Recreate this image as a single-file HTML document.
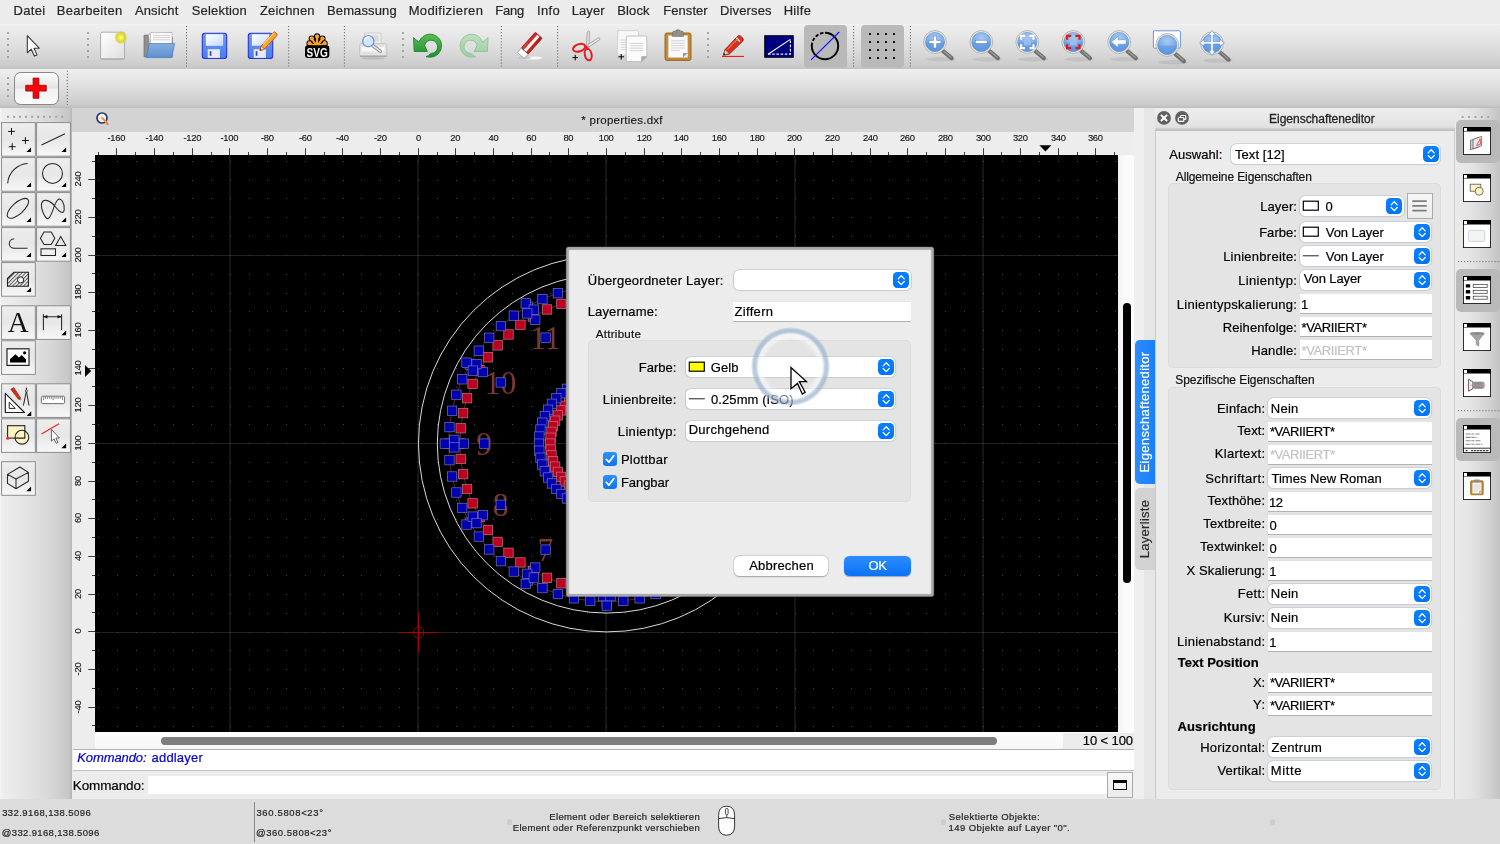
<!DOCTYPE html>
<html lang="de"><head><meta charset="utf-8"><title>properties.dxf</title>
<style>
*{box-sizing:border-box}
html,body{margin:0;padding:0;background:#ececec}
body{width:1500px;height:844px;overflow:hidden;font-family:'Liberation Sans',sans-serif;font-size:13px;color:#000}
#app{position:relative;width:1500px;height:844px;overflow:hidden;will-change:transform;transform:translateZ(0)}
#app div,#app span,#app svg,#app nav,#app section,#app header,#app footer,#app aside,#app button,#app label{position:absolute;margin:0;padding:0}
.t{white-space:pre;display:block;-webkit-text-stroke:.2px currentColor}
.ic{overflow:visible}
button{border:0;background:none;font:inherit}
.combo{background:#fff;border-radius:5.5px;box-shadow:0 0 0 .8px #c3ccd7,0 .5px 1px .5px rgba(90,110,140,.16)}
.pop{background:linear-gradient(#0a80ff,#0074fa);border-radius:4.2px}
.inp{background:#fff;box-shadow:0 .8px 0 0 #a6a6a6,0 -.4px 0 0 #dedede}
.grp{background:#e4e4e4;border-radius:5px;box-shadow:inset 0 0 0 1px #dcdcdc}
.tb{border:1px solid #8f8f8f;background:linear-gradient(#f6f6f6,#e4e4e4 45%,#ededed 55%,#f4f4f4)}
.sel{background:#b9b9b9;border-radius:4px}
.win{background:#fff;border:1px solid #000}
</style></head>
<body>
<div id="app">
<nav id="menubar" style="left:0;top:0;width:1500px;height:24px;background:#ececec"><span class="t" style="left:13.43px;top:3.00px;font-size:13px;line-height:15px;color:#262626;letter-spacing:0.347px;">Datei</span><span class="t" style="left:56.83px;top:3.00px;font-size:13px;line-height:15px;color:#262626;letter-spacing:0.269px;">Bearbeiten</span><span class="t" style="left:134.88px;top:3.00px;font-size:13px;line-height:15px;color:#262626;letter-spacing:0.129px;">Ansicht</span><span class="t" style="left:191.72px;top:3.00px;font-size:13px;line-height:15px;color:#262626;letter-spacing:0.193px;">Selektion</span><span class="t" style="left:259.99px;top:3.00px;font-size:13px;line-height:15px;color:#262626;letter-spacing:0.153px;">Zeichnen</span><span class="t" style="left:327.03px;top:3.00px;font-size:13px;line-height:15px;color:#262626;letter-spacing:0.119px;">Bemassung</span><span class="t" style="left:408.63px;top:3.00px;font-size:13px;line-height:15px;color:#262626;letter-spacing:0.384px;">Modifizieren</span><span class="t" style="left:495.23px;top:3.00px;font-size:13px;line-height:15px;color:#262626;letter-spacing:-0.176px;">Fang</span><span class="t" style="left:537.10px;top:3.00px;font-size:13px;line-height:15px;color:#262626;letter-spacing:0.284px;">Info</span><span class="t" style="left:571.63px;top:3.00px;font-size:13px;line-height:15px;color:#262626;letter-spacing:0.140px;">Layer</span><span class="t" style="left:617.33px;top:3.00px;font-size:13px;line-height:15px;color:#262626;letter-spacing:0.089px;">Block</span><span class="t" style="left:663.23px;top:3.00px;font-size:13px;line-height:15px;color:#262626;letter-spacing:0.068px;">Fenster</span><span class="t" style="left:720.03px;top:3.00px;font-size:13px;line-height:15px;color:#262626;letter-spacing:0.139px;">Diverses</span><span class="t" style="left:783.63px;top:3.00px;font-size:13px;line-height:15px;color:#262626;letter-spacing:0.308px;">Hilfe</span></nav><header id="toolbar1" style="left:0;top:24px;width:1500px;height:44.500px;background:linear-gradient(#f3f3f3 0,#eeeeee 1.500px,#e8e8e8 22%,#dfdfdf 48%,#d5d5d5 72%,#cbcbcb 93%,#c2c2c2 100%)"></header><header id="toolbar2" style="left:0;top:68.500px;width:1500px;height:39.200px;background:linear-gradient(#f1f1f1 0,#ededed 1.500px,#e7e7e7 22%,#dedede 48%,#d4d4d4 72%,#cacaca 92%,#bcbcbc 100%)"></header><div class="sel" style="left:804px;top:25px;width:43px;height:43.3px;"></div><div class="sel" style="left:861px;top:25px;width:42.7px;height:43.3px;"></div><div style="left:14px;top:72.3px;width:44.7px;height:32.4px;border:1.9px solid #878787;border-radius:6.5px;background:linear-gradient(#fdfdfd,#e4e4e4 48%,#f1f1f1 52%,#fbfbfb)"></div><svg class="ic" style="left:0;top:0" width="1500" height="108" viewBox="0 0 1500 108"><defs><radialGradient id="lens" cx=".5" cy=".3" r=".75"><stop offset="0" stop-color="#a9cbf3"/><stop offset="1" stop-color="#5f96e0"/></radialGradient><radialGradient id="glow"><stop offset="0" stop-color="#ffffc8"/><stop offset=".35" stop-color="#f0e83a"/><stop offset=".7" stop-color="#d8d020" stop-opacity=".85"/><stop offset="1" stop-color="#d8d020" stop-opacity="0"/></radialGradient><linearGradient id="pg" x1="0" y1="0" x2="1" y2="1"><stop offset="0" stop-color="#fff"/><stop offset="1" stop-color="#dedede"/></linearGradient><linearGradient id="fold" x1="0" y1="0" x2="0" y2="1"><stop offset="0" stop-color="#86b1e2"/><stop offset="1" stop-color="#5b8fce"/></linearGradient><linearGradient id="flop" x1="0" y1="0" x2="0" y2="1"><stop offset="0" stop-color="#6d9cf6"/><stop offset="1" stop-color="#4a7de8"/></linearGradient><linearGradient id="flab" x1="0" y1="0" x2="1" y2="1"><stop offset="0" stop-color="#fff"/><stop offset="1" stop-color="#c9d8fa"/></linearGradient><linearGradient id="undo" x1="0" y1="0" x2="0" y2="1"><stop offset="0" stop-color="#58bd4e"/><stop offset="1" stop-color="#1f8f33"/></linearGradient><linearGradient id="redo" x1="0" y1="0" x2="0" y2="1"><stop offset="0" stop-color="#bfe0bd"/><stop offset="1" stop-color="#97cda3"/></linearGradient><linearGradient id="red" x1="0" y1="0" x2="1" y2="1"><stop offset="0" stop-color="#e83a3a"/><stop offset="1" stop-color="#b80e0e"/></linearGradient></defs><rect x="7" y="32" width="2" height="2" fill="#a4a4a4"/><rect x="7" y="38" width="2" height="2" fill="#a4a4a4"/><rect x="7" y="44" width="2" height="2" fill="#a4a4a4"/><rect x="7" y="50" width="2" height="2" fill="#a4a4a4"/><rect x="7" y="56" width="2" height="2" fill="#a4a4a4"/><rect x="87" y="32" width="2" height="2" fill="#a4a4a4"/><rect x="87" y="38" width="2" height="2" fill="#a4a4a4"/><rect x="87" y="44" width="2" height="2" fill="#a4a4a4"/><rect x="87" y="50" width="2" height="2" fill="#a4a4a4"/><rect x="87" y="56" width="2" height="2" fill="#a4a4a4"/><rect x="402" y="32" width="2" height="2" fill="#a4a4a4"/><rect x="402" y="38" width="2" height="2" fill="#a4a4a4"/><rect x="402" y="44" width="2" height="2" fill="#a4a4a4"/><rect x="402" y="50" width="2" height="2" fill="#a4a4a4"/><rect x="402" y="56" width="2" height="2" fill="#a4a4a4"/><rect x="707" y="32" width="2" height="2" fill="#a4a4a4"/><rect x="707" y="38" width="2" height="2" fill="#a4a4a4"/><rect x="707" y="44" width="2" height="2" fill="#a4a4a4"/><rect x="707" y="50" width="2" height="2" fill="#a4a4a4"/><rect x="707" y="56" width="2" height="2" fill="#a4a4a4"/><line x1="186.5" y1="26" x2="186.5" y2="66.5" stroke="#4a4a4a" stroke-width="0.9" stroke-dasharray="1 2.05"/><line x1="288.7" y1="26" x2="288.7" y2="66.5" stroke="#4a4a4a" stroke-width="0.9" stroke-dasharray="1 2.05"/><line x1="344.4" y1="26" x2="344.4" y2="66.5" stroke="#4a4a4a" stroke-width="0.9" stroke-dasharray="1 2.05"/><line x1="501.3" y1="26" x2="501.3" y2="66.5" stroke="#4a4a4a" stroke-width="0.9" stroke-dasharray="1 2.05"/><line x1="557.6" y1="26" x2="557.6" y2="66.5" stroke="#4a4a4a" stroke-width="0.9" stroke-dasharray="1 2.05"/><line x1="853.6" y1="26" x2="853.6" y2="66.5" stroke="#4a4a4a" stroke-width="0.9" stroke-dasharray="1 2.05"/><line x1="910.4" y1="26" x2="910.4" y2="66.5" stroke="#4a4a4a" stroke-width="0.9" stroke-dasharray="1 2.05"/><rect x="7" y="77" width="2" height="2" fill="#a4a4a4"/><rect x="7" y="83" width="2" height="2" fill="#a4a4a4"/><rect x="7" y="89" width="2" height="2" fill="#a4a4a4"/><rect x="7" y="95" width="2" height="2" fill="#a4a4a4"/><line x1="67.3" y1="70.7" x2="67.3" y2="105" stroke="#4a4a4a" stroke-width="0.9" stroke-dasharray="1 2.05"/><path d="M33.100 78.100h5.800v7.200h7.400v5.800h-7.400v7.200h-5.800v-7.200h-7.400v-5.800h7.400z" fill="#fb0007" stroke="#8a1010" stroke-width=".8"/><path d="M27.3 35.6v17.2l4-3.6 3.1 6.9 2.6-1.2-3-6.7h5.2z" fill="#fff" stroke="#3a3a3a" stroke-width="1.1" stroke-linejoin="round"/><rect x="100.6" y="32.6" width="24" height="27.4" rx="1.6" fill="#b9b9b9"/><rect x="100.6" y="32.2" width="24" height="26.6" rx="1.4" fill="url(#pg)" stroke="#a2a2a2" stroke-width=".8"/><circle cx="120.8" cy="37.6" r="6.6" fill="url(#glow)"/><path d="M144 35.2h6.2l1.6 2h20.6v19.6H144z" fill="#8f8f8f" stroke="#6d6d6d" stroke-width=".7"/><path d="M148.6 34.2l22.6-1.9 .9 17.5-22 1.8z" fill="#f4f4f4" stroke="#9a9a9a" stroke-width=".6"/><path d="M150.6 32.6h21.4v18h-21.4z" fill="#fdfdfd" stroke="#a5a5a5" stroke-width=".6"/><path d="M153 35.4h17M153 37.6h17M153 39.8h17" stroke="#cfcfcf" stroke-width="1"/><path d="M149.3 43.6h25.2l-2.7 14h-25.6z" fill="url(#fold)" stroke="#4d7fbd" stroke-width=".8" stroke-linejoin="round"/><rect x="202.3" y="33.3" width="24.4" height="25.2" rx="2.6" fill="url(#flop)" stroke="#2b35cf" stroke-width="1.1"/><path d="M205.9 34.2h17.2v11.6h-17.2z" fill="url(#flab)"/><path d="M207.70000000000002 49.2h12.2v8.7h-12.2z" fill="#e9e9f1"/><rect x="209.70000000000002" y="51.2" width="1.7" height="4.6" fill="#2544d6"/><rect x="248.3" y="33.3" width="24.4" height="25.2" rx="2.6" fill="url(#flop)" stroke="#2b35cf" stroke-width="1.1"/><path d="M251.9 34.2h17.2v11.6h-17.2z" fill="url(#flab)"/><path d="M253.70000000000002 49.2h12.2v8.7h-12.2z" fill="#e9e9f1"/><rect x="255.70000000000002" y="51.2" width="1.7" height="4.6" fill="#2544d6"/><path d="M260 50.6l1.3-4.8 12.2-13.4q1-.9 2 .1l1.3 1.3q.9 1-.1 2l-12.2 13.3z" fill="#f6a62a" stroke="#c8452b" stroke-width=".9" stroke-linejoin="round"/><path d="M260 50.6l1.3-4.8 3.2 3.4z" fill="#f3d9b0" stroke="#8a4a2a" stroke-width=".6"/><path d="M260 50.6l.5-1.8 1.2 1.3z" fill="#222"/><path d="M263 44.6l10.6-11.4" stroke="#fbd27c" stroke-width="1.1"/><circle cx="309.6" cy="43.4" r="2.600" fill="#f7a329" stroke="#000" stroke-width="1.100"/><circle cx="311.8" cy="38.6" r="2.600" fill="#f7a329" stroke="#000" stroke-width="1.100"/><circle cx="317.1" cy="36.5" r="2.600" fill="#f7a329" stroke="#000" stroke-width="1.100"/><circle cx="322.4" cy="38.6" r="2.600" fill="#f7a329" stroke="#000" stroke-width="1.100"/><circle cx="324.6" cy="43.4" r="2.600" fill="#f7a329" stroke="#000" stroke-width="1.100"/><path d="M317.100 46.500L309.6 43.4M317.100 46.500L311.8 38.6M317.100 46.500L317.1 36.5M317.100 46.500L322.4 38.6M317.100 46.500L324.6 43.4" stroke="#000" stroke-width="4.200"/><path d="M317.100 46.500L309.6 43.4M317.100 46.500L311.8 38.6M317.100 46.500L317.1 36.5M317.100 46.500L322.4 38.6M317.100 46.500L324.6 43.4" stroke="#f7a329" stroke-width="2.200"/><circle cx="309.6" cy="43.4" r="2.050" fill="#f7a329"/><circle cx="311.8" cy="38.6" r="2.050" fill="#f7a329"/><circle cx="317.1" cy="36.5" r="2.050" fill="#f7a329"/><circle cx="322.4" cy="38.6" r="2.050" fill="#f7a329"/><circle cx="324.6" cy="43.4" r="2.050" fill="#f7a329"/><rect x="305" y="45.300" width="24.300" height="12.700" rx="3" fill="#000"/><text x="317.150" y="56.600" text-anchor="middle" font-family="Liberation Sans,sans-serif" font-weight="700" font-size="12.400" textLength="21.200" lengthAdjust="spacingAndGlyphs" fill="#fff">SVG</text><path d="M364.6 33h16.4v12h-16.4z" fill="#ececec" stroke="#c4c4c4" stroke-width=".7"/><path d="M367 35.4h11.6v6h-11.6z" fill="#dadada"/><rect x="359.6" y="43.6" width="27.2" height="13" rx="2" fill="#e3e3e3" stroke="#b8b8b8" stroke-width=".7"/><rect x="361.6" y="47" width="23.2" height="4.4" rx="1" fill="#f8f8f8"/><path d="M360 56.2h26.6" stroke="#a9a9a9" stroke-width="1.6"/><ellipse cx="373" cy="58.4" rx="12" ry="1.2" fill="#000" opacity=".12"/><path d="M372.8 45.6l7.4 5.6" stroke="#8e8e8e" stroke-width="3.4" stroke-linecap="round"/><path d="M372.8 45.6l7.4 5.6" stroke="#e6e6e6" stroke-width="1.6" stroke-linecap="round"/><circle cx="368.3" cy="41.2" r="5.6" fill="#d6e6f8" stroke="#6d97d9" stroke-width="1.3"/><path d="M364.4 40.4a4 4 0 0 1 5.4-3.2" stroke="#fff" stroke-width="1.2" fill="none"/><path d="M413.500 37.600L418.700 42.100 421 38.600A11.500 11.500 0 1 1 430.500 57.200L426 56.800Q428.600 55.600 431 53.400A6.600 6.600 0 1 0 424.600 45.400L427.400 51.500H414.200z" fill="url(#undo)" stroke="#1b8331" stroke-width=".9" stroke-linejoin="round"/><path transform="translate(901.600 0) scale(-1 1)" d="M413.500 37.600L418.700 42.100 421 38.600A11.500 11.500 0 1 1 430.500 57.200L426 56.800Q428.600 55.600 431 53.400A6.600 6.600 0 1 0 424.600 45.400L427.400 51.500H414.200z" fill="url(#redo)" stroke="#8ec49b" stroke-width=".9" stroke-linejoin="round"/><ellipse cx="531" cy="58" rx="11.5" ry="1.600" fill="#fff" opacity=".8"/><ellipse cx="525" cy="57.800" rx="6" ry="1.400" fill="#000" opacity=".18"/><g transform="translate(517.400 52.400) rotate(-48.500)"><rect x="0" y="0" width="6" height="9.200" fill="#fff" stroke="#8a8a8a" stroke-width=".7"/><rect x="6" y="0" width="21" height="9.200" rx=".800" fill="url(#red)" stroke="#8f1616" stroke-width=".7"/><rect x="6.400" y="3.100" width="20" height="3.100" fill="#fff"/></g><path d="M586.6 45.6l.6-13.600q1.200-1.600 2.200-.6l-.4 15.800z" fill="#e9e9e9" stroke="#8a8a8a" stroke-width=".7"/><path d="M587.6 44.8l11.200-7.200q1.400 .6 1 2l-11 7.600z" fill="#e9e9e9" stroke="#8a8a8a" stroke-width=".7"/><ellipse cx="579.2" cy="47.8" rx="6.4" ry="3.6" transform="rotate(-18 579.2 47.8)" fill="none" stroke="#e21d24" stroke-width="2"/><ellipse cx="588.2" cy="54.6" rx="3.4" ry="5.8" transform="rotate(-12 588.2 54.6)" fill="none" stroke="#e21d24" stroke-width="2"/><path d="M584.6 45.8l3.600 3.400" stroke="#e21d24" stroke-width="2.4"/><path d="M572.4 57.6h5.600M575.2 54.8v5.600" stroke="#000" stroke-width="1"/><path d="M617.600 30.6h19.400q1.600 0 1.600 1.600v22.800h-21z" fill="#f7f7f7" stroke="#c9c9c9" stroke-width=".7"/><path d="M620.400 40h10M620.400 42.400h10M620.400 44.800h10M620.400 47.200h10M620.400 49.600h10" stroke="#d6d6d6" stroke-width=".9"/><path d="M626.200 37.400q0-1.400 1.400-1.400h17.800q1.400 0 1.400 1.400v19.200l-5.200 5h-14q-1.400 0-1.400-1.400z" fill="#fbfbfb" stroke="#b4b4b4" stroke-width=".8"/><path d="M630 43.400h13M630 45.800h13M630 48.200h13M630 50.600h13" stroke="#cdcdcd" stroke-width=".9"/><path d="M641.600 61.600v-5h5.200z" fill="#a8a8a8" stroke="#9a9a9a" stroke-width=".5"/><path d="M618.400 56.800h5.600M621.200 54v5.600" stroke="#000" stroke-width="1"/><rect x="665" y="33" width="26" height="27.400" rx="1.800" fill="#c4882e" stroke="#93601a" stroke-width=".9"/><path d="M668.200 35.400h19.600v22.200h-19.600z" fill="#fafafa" stroke="#b9b9b9" stroke-width=".5"/><path d="M671 40.800h14M671 43.200h14M671 45.600h14M671 48h14M671 50.400h9" stroke="#cfcfcf" stroke-width=".9"/><path d="M683 57.600v-4.600h4.800z" fill="#9a9a9a"/><path d="M672.400 33.200q0-2 1.600-2h1.200q.400-1.400 2.800-1.400t2.800 1.400h1.200q1.600 0 1.600 2v3.200h-11.200z" fill="#8f8f88" stroke="#6f6f68" stroke-width=".6"/><path d="M722 56.400h22" stroke="#f00" stroke-width="1"/><path d="M723.400 55.200l1.600-5.600 13-13.600q1.400-1.200 2.800 .2l2 2q1.200 1.400 0 2.800l-13.400 13z" fill="#dd2c1e" stroke="#8a2a12" stroke-width=".9" stroke-linejoin="round"/><path d="M723.400 55.200l1.600-5.600 4.200 4z" fill="#f1d3a8" stroke="#6b4a2a" stroke-width=".6"/><path d="M723.400 55.200l.7-2.300 1.600 1.600z" fill="#111"/><path d="M736.400 38l3.600 3.600" stroke="#d8d8d8" stroke-width="1.800"/><path d="M727.400 49.400l10.400-10.600" stroke="#f57a5a" stroke-width="1.200"/><rect x="764.700" y="35.700" width="28.600" height="21.600" fill="#00007f" stroke="#000" stroke-width=".9"/><path d="M768 54.200l22.400-14.800" stroke="#fff" stroke-width="1.100"/><path d="M768 54.200h22.400v-14.800" stroke="#e6e6f0" stroke-width="1.200" stroke-dasharray="2.600 1.600" fill="none"/><path d="M825 32.800A13.200 13.200 0 1 1 811.800 46" fill="none" stroke="#000" stroke-width="1.900"/><path d="M811.800 46A13.200 13.200 0 0 1 825 32.800" fill="none" stroke="#000" stroke-width="1.900" stroke-dasharray="3.400 1.800"/><path d="M811 59.800l28.200-27.800" stroke="#1414ff" stroke-width="1.100"/><rect x="869" y="33" width="2" height="2" fill="#111"/><rect x="869" y="41" width="2" height="2" fill="#111"/><rect x="869" y="49" width="2" height="2" fill="#111"/><rect x="869" y="57" width="2" height="2" fill="#111"/><rect x="877" y="33" width="2" height="2" fill="#111"/><rect x="877" y="41" width="2" height="2" fill="#111"/><rect x="877" y="49" width="2" height="2" fill="#111"/><rect x="877" y="57" width="2" height="2" fill="#111"/><rect x="885" y="33" width="2" height="2" fill="#111"/><rect x="885" y="41" width="2" height="2" fill="#111"/><rect x="885" y="49" width="2" height="2" fill="#111"/><rect x="885" y="57" width="2" height="2" fill="#111"/><rect x="893" y="33" width="2" height="2" fill="#111"/><rect x="893" y="41" width="2" height="2" fill="#111"/><rect x="893" y="49" width="2" height="2" fill="#111"/><rect x="893" y="57" width="2" height="2" fill="#111"/><ellipse cx="941" cy="59.2" rx="15" ry="2.2" fill="#000" opacity=".07"/><path d="M942.6 50.6 L951.6 58.2" stroke="#6f716c" stroke-width="4.2" stroke-linecap="round"/><path d="M944 51.2 L951 57.2" stroke="#9b9d98" stroke-width="1.2" stroke-linecap="round"/><circle cx="935" cy="42" r="11.399999999999999" fill="#e9e9e4" stroke="#a9aba4" stroke-width=".8"/><circle cx="935" cy="42" r="9.6" fill="url(#lens)" stroke="#5f8fd0" stroke-width=".6"/><path d="M925.8 42.5 A9.2 9.2 0 0 0 944.2 42.5 Z" fill="#4d8bdc" opacity=".45"/><path d="M929 40.4h4.4v-4.4h3.2v4.4h4.4v3.2h-4.4v4.4h-3.2v-4.4h-4.4z" fill="#fff" stroke="#4f7fc4" stroke-width=".6"/><ellipse cx="987.3" cy="59.2" rx="15" ry="2.2" fill="#000" opacity=".07"/><path d="M988.9 50.6 L997.9 58.2" stroke="#6f716c" stroke-width="4.2" stroke-linecap="round"/><path d="M990.3 51.2 L997.3 57.2" stroke="#9b9d98" stroke-width="1.2" stroke-linecap="round"/><circle cx="981.3" cy="42" r="11.399999999999999" fill="#e9e9e4" stroke="#a9aba4" stroke-width=".8"/><circle cx="981.3" cy="42" r="9.6" fill="url(#lens)" stroke="#5f8fd0" stroke-width=".6"/><path d="M972.0999999999999 42.5 A9.2 9.2 0 0 0 990.5 42.5 Z" fill="#4d8bdc" opacity=".45"/><rect x="975.3" y="40.2" width="12" height="3.3" fill="#fff" stroke="#4f7fc4" stroke-width=".6"/><ellipse cx="1033.3" cy="59.2" rx="15" ry="2.2" fill="#000" opacity=".07"/><path d="M1034.8999999999999 50.6 L1043.8999999999999 58.2" stroke="#6f716c" stroke-width="4.2" stroke-linecap="round"/><path d="M1036.3 51.2 L1043.3 57.2" stroke="#9b9d98" stroke-width="1.2" stroke-linecap="round"/><circle cx="1027.3" cy="42" r="11.399999999999999" fill="#e9e9e4" stroke="#a9aba4" stroke-width=".8"/><circle cx="1027.3" cy="42" r="9.6" fill="url(#lens)" stroke="#5f8fd0" stroke-width=".6"/><path d="M1018.0999999999999 42.5 A9.2 9.2 0 0 0 1036.5 42.5 Z" fill="#4d8bdc" opacity=".45"/><path d="M1021.0999999999999 39.8V35.8H1025.1M1021.0999999999999 44.2V48.2H1025.1M1033.5 39.8V35.8H1029.5M1033.5 44.2V48.2H1029.5" fill="none" stroke="#fff" stroke-width="2.2"/><rect x="1023.9" y="38.6" width="6.8" height="6.8" fill="#9dbfee" opacity=".9"/><ellipse cx="1079.3" cy="59.2" rx="15" ry="2.2" fill="#000" opacity=".07"/><path d="M1080.8999999999999 50.6 L1089.8999999999999 58.2" stroke="#6f716c" stroke-width="4.2" stroke-linecap="round"/><path d="M1082.3 51.2 L1089.3 57.2" stroke="#9b9d98" stroke-width="1.2" stroke-linecap="round"/><circle cx="1073.3" cy="42" r="11.399999999999999" fill="#e9e9e4" stroke="#a9aba4" stroke-width=".8"/><circle cx="1073.3" cy="42" r="9.6" fill="url(#lens)" stroke="#5f8fd0" stroke-width=".6"/><path d="M1064.1 42.5 A9.2 9.2 0 0 0 1082.5 42.5 Z" fill="#4d8bdc" opacity=".45"/><path d="M1067.1 39.8V35.8H1071.1M1067.1 44.2V48.2H1071.1M1079.5 39.8V35.8H1075.5M1079.5 44.2V48.2H1075.5" fill="none" stroke="#f01414" stroke-width="2.2"/><rect x="1069.8999999999999" y="38.6" width="6.8" height="6.8" fill="#9dbfee" opacity=".9"/><ellipse cx="1125.2" cy="59.2" rx="15" ry="2.2" fill="#000" opacity=".07"/><path d="M1126.8 50.6 L1135.8 58.2" stroke="#6f716c" stroke-width="4.2" stroke-linecap="round"/><path d="M1128.2 51.2 L1135.2 57.2" stroke="#9b9d98" stroke-width="1.2" stroke-linecap="round"/><circle cx="1119.2" cy="42" r="11.399999999999999" fill="#e9e9e4" stroke="#a9aba4" stroke-width=".8"/><circle cx="1119.2" cy="42" r="9.6" fill="url(#lens)" stroke="#5f8fd0" stroke-width=".6"/><path d="M1110.0 42.5 A9.2 9.2 0 0 0 1128.4 42.5 Z" fill="#4d8bdc" opacity=".45"/><path d="M1111.2 42l7-5.6v3.4h8v4.4h-8v3.4z" fill="#fff" stroke="#4f7fc4" stroke-width=".5"/><rect x="1153.400" y="30.800" width="27" height="17.400" rx="1.200" fill="#fff" stroke="#5b8fd8" stroke-width=".9"/><ellipse cx="1173.3" cy="62.2" rx="15" ry="2.2" fill="#000" opacity=".07"/><path d="M1174.8999999999999 53.6 L1183.8999999999999 61.2" stroke="#6f716c" stroke-width="4.2" stroke-linecap="round"/><path d="M1176.3 54.2 L1183.3 60.2" stroke="#9b9d98" stroke-width="1.2" stroke-linecap="round"/><circle cx="1167.3" cy="45" r="11.399999999999999" fill="#e9e9e4" stroke="#a9aba4" stroke-width=".8"/><circle cx="1167.3" cy="45" r="9.6" fill="url(#lens)" stroke="#5f8fd0" stroke-width=".6"/><path d="M1158.1 45.5 A9.2 9.2 0 0 0 1176.5 45.5 Z" fill="#4d8bdc" opacity=".45"/><ellipse cx="1218" cy="60.599999999999994" rx="15" ry="2.2" fill="#000" opacity=".07"/><path d="M1219.6 52.0 L1228.6 59.599999999999994" stroke="#6f716c" stroke-width="4.2" stroke-linecap="round"/><path d="M1221 52.599999999999994 L1228 58.599999999999994" stroke="#9b9d98" stroke-width="1.2" stroke-linecap="round"/><circle cx="1212" cy="43.4" r="11.399999999999999" fill="#e9e9e4" stroke="#a9aba4" stroke-width=".8"/><circle cx="1212" cy="43.4" r="9.6" fill="url(#lens)" stroke="#5f8fd0" stroke-width=".6"/><path d="M1202.8 43.9 A9.2 9.2 0 0 0 1221.2 43.9 Z" fill="#4d8bdc" opacity=".45"/><path d="M1212 30.400l3.400 4.600h-2.200v6.600h6.600v-2.200l4.600 3.400-4.600 3.400v-2.200h-6.600v6.600h2.200l-3.400 4.600-3.400-4.600h2.200v-6.600h-6.600v2.200l-4.600-3.400 4.600-3.400v2.200h6.600v-6.600h-2.200z" fill="#fff" stroke="#4f86d8" stroke-width=".6"/></svg>
<aside id="tools" style="left:0;top:108px;width:71.5px;height:690.6px;background:linear-gradient(90deg,#f6f6f6 0,#eeeeee 2px,#e6e6e6 30%,#d8d8d8 68%,#c6c6c6 96%,#b4b4b4 100%)"></aside><svg class="ic" style="left:0;top:0" width="72" height="800" viewBox="0 0 72 800"><defs><linearGradient id="tbg" x1="0" y1="0" x2="0" y2="1"><stop offset="0" stop-color="#f0f0f0"/><stop offset=".12" stop-color="#ebebeb"/><stop offset=".5" stop-color="#e7e7e7"/><stop offset=".8" stop-color="#f1f1f1"/><stop offset="1" stop-color="#f7f7f7"/></linearGradient></defs><rect x="1.55" y="122.60" width="33.800" height="33.600" fill="url(#tbg)" stroke="#8d8d8d" stroke-width="1"/><rect x="36.60" y="122.60" width="33.800" height="33.600" fill="url(#tbg)" stroke="#8d8d8d" stroke-width="1"/><rect x="1.55" y="157.60" width="33.800" height="33.600" fill="url(#tbg)" stroke="#8d8d8d" stroke-width="1"/><rect x="36.60" y="157.60" width="33.800" height="33.600" fill="url(#tbg)" stroke="#8d8d8d" stroke-width="1"/><rect x="1.55" y="192.60" width="33.800" height="33.600" fill="url(#tbg)" stroke="#8d8d8d" stroke-width="1"/><rect x="36.60" y="192.60" width="33.800" height="33.600" fill="url(#tbg)" stroke="#8d8d8d" stroke-width="1"/><rect x="1.55" y="227.60" width="33.800" height="33.600" fill="url(#tbg)" stroke="#8d8d8d" stroke-width="1"/><rect x="36.60" y="227.60" width="33.800" height="33.600" fill="url(#tbg)" stroke="#8d8d8d" stroke-width="1"/><rect x="1.55" y="262.60" width="33.800" height="33.600" fill="url(#tbg)" stroke="#8d8d8d" stroke-width="1"/><rect x="1.55" y="305.80" width="33.800" height="33.600" fill="url(#tbg)" stroke="#8d8d8d" stroke-width="1"/><rect x="36.60" y="305.80" width="33.800" height="33.600" fill="url(#tbg)" stroke="#8d8d8d" stroke-width="1"/><rect x="1.55" y="340.80" width="33.800" height="33.600" fill="url(#tbg)" stroke="#8d8d8d" stroke-width="1"/><rect x="1.55" y="383.80" width="33.800" height="33.600" fill="url(#tbg)" stroke="#8d8d8d" stroke-width="1"/><rect x="36.60" y="383.80" width="33.800" height="33.600" fill="url(#tbg)" stroke="#8d8d8d" stroke-width="1"/><rect x="1.55" y="418.80" width="33.800" height="33.600" fill="url(#tbg)" stroke="#8d8d8d" stroke-width="1"/><rect x="36.60" y="418.80" width="33.800" height="33.600" fill="url(#tbg)" stroke="#8d8d8d" stroke-width="1"/><rect x="1.55" y="461.70" width="33.800" height="33.600" fill="url(#tbg)" stroke="#8d8d8d" stroke-width="1"/><rect x="7.00" y="115.800" width="2" height="2" fill="#a2a2a2"/><rect x="13.02" y="115.800" width="2" height="2" fill="#a2a2a2"/><rect x="19.04" y="115.800" width="2" height="2" fill="#a2a2a2"/><rect x="25.06" y="115.800" width="2" height="2" fill="#a2a2a2"/><rect x="31.08" y="115.800" width="2" height="2" fill="#a2a2a2"/><rect x="37.10" y="115.800" width="2" height="2" fill="#a2a2a2"/><rect x="43.12" y="115.800" width="2" height="2" fill="#a2a2a2"/><rect x="49.14" y="115.800" width="2" height="2" fill="#a2a2a2"/><rect x="55.16" y="115.800" width="2" height="2" fill="#a2a2a2"/><rect x="61.18" y="115.800" width="2" height="2" fill="#a2a2a2"/><path d="M26.35 152.10h4.700v-4.700z" fill="#000"/><path d="M61.40 152.10h4.700v-4.700z" fill="#000"/><path d="M26.35 187.10h4.700v-4.700z" fill="#000"/><path d="M61.40 187.10h4.700v-4.700z" fill="#000"/><path d="M26.35 222.10h4.700v-4.700z" fill="#000"/><path d="M61.40 222.10h4.700v-4.700z" fill="#000"/><path d="M26.35 257.10h4.700v-4.700z" fill="#000"/><path d="M61.40 257.10h4.700v-4.700z" fill="#000"/><path d="M26.35 292.10h4.700v-4.700z" fill="#000"/><path d="M61.40 335.30h4.700v-4.700z" fill="#000"/><path d="M26.65 415.90h4.600v-4.600z" fill="#000"/><path d="M61.40 448.30h4.700v-4.700z" fill="#000"/><path d="M26.35 491.20h4.700v-4.700z" fill="#000"/><path d="M8.1 131.4h6.800M11.5 128.0v6.800" stroke="#111" stroke-width="1"/><path d="M22.0 140.5h6.800M25.4 137.1v6.800" stroke="#111" stroke-width="1"/><path d="M8.799999999999999 146.7h6.800M12.2 143.29999999999998v6.800" stroke="#111" stroke-width="1"/><path d="M41.500 145 65 133.800" fill="none" stroke="#262626" stroke-width="1.050"/><path d="M7.700 183.400A21.500 21.500 0 0 1 27.600 163.400" fill="none" stroke="#262626" stroke-width="1.050"/><circle cx="52.500" cy="173.400" r="10" fill="none" stroke="#262626" stroke-width="1.050"/><ellipse cx="17.900" cy="208.300" rx="13.400" ry="5.700" transform="rotate(-42 17.900 208.300)" fill="none" stroke="#262626" stroke-width="1.050"/><path d="M41.600 203.400c2-5.600 9-3 14 3.600s8.400 6.800 8.600 2.400c.4-6.600-3.400-12.600-6.600-9.400-4 4-5.600 17.400-9.600 18.600-2.600.6-7.600-10-6.400-15.200z" fill="none" stroke="#262626" stroke-width="1.050"/><path d="M14.200 239a4.600 4.600 0 0 0-.6 9.200h14" fill="none" stroke="#262626" stroke-width="1.050"/><path d="M40.400 238.200l3.600-6.200h7.200l3.600 6.200-3.600 6.200h-7.200z" fill="none" stroke="#262626" stroke-width="1.050"/><path d="M55.600 245.400h10.200l-5.100-8.800z" fill="none" stroke="#262626" stroke-width="1.050"/><rect x="41" y="248.800" width="14.500" height="6.700" fill="none" stroke="#262626" stroke-width="1.050"/><defs><pattern id="hat" width="2.600" height="2.600" patternUnits="userSpaceOnUse" patternTransform="rotate(45)"><rect width="1" height="2.600" fill="#555"/></pattern></defs><path d="M7.500 278.500l6.400-6.200h14.500v14h-20.900z" fill="#f4f4f4"/><path d="M7.500 278.500l6.400-6.200h14.500v14h-20.900z" fill="url(#hat)" stroke="#1f1f1f" stroke-width="1.100"/><circle cx="20.600" cy="279.900" r="3.100" fill="#f6f6f6" stroke="#1f1f1f" stroke-width="1"/><text x="18.200" y="331.700" text-anchor="middle" font-family="Liberation Serif,serif" font-size="29" fill="#111">A</text><path d="M43.400 314.200v16M61.600 314.200v16M43.400 316.800h18.200" fill="none" stroke="#262626" stroke-width="1.050"/><path d="M43.400 316.800l4-1.700v3.400zM61.600 316.800l-4-1.700v3.400z" fill="#111"/><rect x="7" y="348.800" width="22" height="16.600" fill="#fff" stroke="#222" stroke-width="1.200"/><path d="M10 362.400v-3.200l5.400-5 3.600 3.200 2.600-2.400 4.400 4.200v3.200z" fill="#000"/><circle cx="24.600" cy="352.800" r="1.600" fill="#000"/><path d="M5.300 393.400v19.100h19.200z" fill="#fff" stroke="#222" stroke-width="1.200" stroke-linejoin="round"/><path d="M9.200 402.300v6.100h6.100z" fill="#fff" stroke="#222" stroke-width="1"/><path d="M10.800 389.200l3-1.600 6.600 10.200-.400 1.600-1.800-.400z" fill="#dd2c1e" stroke="#8a2a12" stroke-width=".7"/><path d="M18.200 398.600l1.800.400.400-1.600.6 2.600z" fill="#e9c79a" stroke="#6b4a2a" stroke-width=".4"/><path d="M26.400 387.600v3.400M26.400 391l-3 14.600M26.400 391l2.600 14.600" stroke="#222" stroke-width="1" fill="none"/><circle cx="26.400" cy="391" r="1.100" fill="#fff" stroke="#222" stroke-width=".7"/><rect x="41.400" y="396.200" width="23.200" height="7.400" rx="1.200" fill="#fff" stroke="#6e6e6e" stroke-width="1"/><path d="M43.6 396.600v3.6M45.5 396.600v2.2M47.4 396.600v2.2M49.3 396.600v2.2M51.2 396.600v2.2M53.1 396.600v3.6M55.0 396.600v2.2M56.9 396.600v2.2M58.8 396.600v2.2M60.7 396.600v2.2M62.6 396.600v3.6" stroke="#555" stroke-width=".7"/><rect x="7.600" y="425.700" width="17.200" height="12.400" fill="#fff3c4" stroke="#222" stroke-width="1.100"/><circle cx="21.900" cy="437.200" r="6.900" fill="#fff3c4" stroke="#222" stroke-width="1.100"/><path d="M15 438.100h9.800v-7.400" fill="none" stroke="#222" stroke-width="1.100"/><circle cx="7.700" cy="438.200" r="1.500" fill="#f22"/><path d="M41.500 434 59 423.800" stroke="#f22" stroke-width="1.200"/><path d="M51.400 429.400v11.800l2.600-2.400 2.200 4.600 1.800-.9-2.100-4.500h3.500z" fill="#fff" stroke="#555" stroke-width=".9" stroke-linejoin="round"/><path d="M7.500 474.400l12.400-7.400 8.500 5.400v8.900l-12.400 7.400-8.500-5.300zM7.500 474.400l8.500 4.600 12.400-6.600M16 479v9.700" fill="none" stroke="#262626" stroke-width="1.050" stroke-linejoin="round"/></svg>
<div style="left:71.5px;top:108px;width:1062.5px;height:23.6px;background:#d3d3d3"></div><span class="t" style="left:581.32px;top:113.70px;font-size:11.5px;line-height:12px;color:#161616;letter-spacing:0.255px;-webkit-text-stroke:.15px currentColor">* properties.dxf</span><svg class="ic" style="left:96px;top:112px;" width="13" height="14" viewBox="0 0 13 14"><circle cx="6" cy="6" r="5" fill="#fff" stroke="#26327c" stroke-width="1.700"/><path d="M3 6h6M6 3v6" stroke="#c9a0a0" stroke-width=".6"/><path d="M6 5.600l5.600 6.200" stroke="#f0a020" stroke-width="2"/><path d="M10.800 11l1.300 1.600" stroke="#e86a6a" stroke-width="1.800"/></svg><div style="left:71.5px;top:131.6px;width:1062.5px;height:23.4px;background:#ededed"></div><div style="left:71.5px;top:155px;width:23.5px;height:593.6px;background:#ededed"></div><svg class="ic" style="left:0;top:0" width="1500" height="760" viewBox="0 0 1500 760"><path d="M98.50 152V155M116.50 148.200V155M135.50 152V155M154.50 148.200V155M173.50 152V155M192.50 148.200V155M211.50 152V155M229.50 148.200V155M248.50 152V155M267.50 148.200V155M286.50 152V155M305.50 148.200V155M324.50 152V155M342.50 148.200V155M361.50 152V155M380.50 148.200V155M399.50 152V155M418.50 148.200V155M437.50 152V155M455.50 148.200V155M474.50 152V155M493.50 148.200V155M512.50 152V155M531.50 148.200V155M549.50 152V155M568.50 148.200V155M587.50 152V155M606.50 148.200V155M625.50 152V155M644.50 148.200V155M662.50 152V155M681.50 148.200V155M700.50 152V155M719.50 148.200V155M738.50 152V155M757.50 148.200V155M775.50 152V155M794.50 148.200V155M813.50 152V155M832.50 148.200V155M851.50 152V155M870.50 148.200V155M888.50 152V155M907.50 148.200V155M926.50 152V155M945.50 148.200V155M964.50 152V155M983.50 148.200V155M1001.50 152V155M1020.50 148.200V155M1039.50 152V155M1058.50 148.200V155M1077.50 152V155M1095.50 148.200V155M1114.50 152V155M92 725.50H95M88.300 707.50H95M92 688.50H95M88.300 669.50H95M92 650.50H95M88.300 631.50H95M92 612.50H95M88.300 594.50H95M92 575.50H95M88.300 556.50H95M92 537.50H95M88.300 518.50H95M92 499.50H95M88.300 481.50H95M92 462.50H95M88.300 443.50H95M92 424.50H95M88.300 405.50H95M92 386.50H95M88.300 368.50H95M92 349.50H95M88.300 330.50H95M92 311.50H95M88.300 292.50H95M92 273.50H95M88.300 255.50H95M92 236.50H95M88.300 217.50H95M92 198.50H95M88.300 179.50H95M92 161.50H95" stroke="#3c3c3c" stroke-width="1" fill="none"/><path d="M1039.400 145.200h12l-6 6.200z" fill="#000"/><path d="M85 365v12l6.200-6z" fill="#000"/></svg><span class="t" style="left:107.49px;top:132.00px;font-size:9.4px;line-height:11px;color:#141414;letter-spacing:-0.280px;-webkit-text-stroke:.15px currentColor">-160</span><span class="t" style="left:145.49px;top:132.00px;font-size:9.4px;line-height:11px;color:#141414;letter-spacing:-0.280px;-webkit-text-stroke:.15px currentColor">-140</span><span class="t" style="left:183.49px;top:132.00px;font-size:9.4px;line-height:11px;color:#141414;letter-spacing:-0.280px;-webkit-text-stroke:.15px currentColor">-120</span><span class="t" style="left:220.49px;top:132.00px;font-size:9.4px;line-height:11px;color:#141414;letter-spacing:-0.280px;-webkit-text-stroke:.15px currentColor">-100</span><span class="t" style="left:260.96px;top:132.00px;font-size:9.4px;line-height:11px;color:#141414;letter-spacing:-0.280px;-webkit-text-stroke:.15px currentColor">-80</span><span class="t" style="left:298.96px;top:132.00px;font-size:9.4px;line-height:11px;color:#141414;letter-spacing:-0.280px;-webkit-text-stroke:.15px currentColor">-60</span><span class="t" style="left:335.96px;top:132.00px;font-size:9.4px;line-height:11px;color:#141414;letter-spacing:-0.280px;-webkit-text-stroke:.15px currentColor">-40</span><span class="t" style="left:373.96px;top:132.00px;font-size:9.4px;line-height:11px;color:#141414;letter-spacing:-0.280px;-webkit-text-stroke:.15px currentColor">-20</span><span class="t" style="left:415.88px;top:132.00px;font-size:9.4px;line-height:11px;color:#141414;-webkit-text-stroke:.15px currentColor">0</span><span class="t" style="left:450.36px;top:132.00px;font-size:9.4px;line-height:11px;color:#141414;letter-spacing:-0.280px;-webkit-text-stroke:.15px currentColor">20</span><span class="t" style="left:488.49px;top:132.00px;font-size:9.4px;line-height:11px;color:#141414;letter-spacing:-0.280px;-webkit-text-stroke:.15px currentColor">40</span><span class="t" style="left:526.36px;top:132.00px;font-size:9.4px;line-height:11px;color:#141414;letter-spacing:-0.280px;-webkit-text-stroke:.15px currentColor">60</span><span class="t" style="left:563.39px;top:132.00px;font-size:9.4px;line-height:11px;color:#141414;letter-spacing:-0.280px;-webkit-text-stroke:.15px currentColor">80</span><span class="t" style="left:598.76px;top:132.00px;font-size:9.4px;line-height:11px;color:#141414;letter-spacing:-0.280px;-webkit-text-stroke:.15px currentColor">100</span><span class="t" style="left:636.76px;top:132.00px;font-size:9.4px;line-height:11px;color:#141414;letter-spacing:-0.280px;-webkit-text-stroke:.15px currentColor">120</span><span class="t" style="left:673.76px;top:132.00px;font-size:9.4px;line-height:11px;color:#141414;letter-spacing:-0.280px;-webkit-text-stroke:.15px currentColor">140</span><span class="t" style="left:711.76px;top:132.00px;font-size:9.4px;line-height:11px;color:#141414;letter-spacing:-0.280px;-webkit-text-stroke:.15px currentColor">160</span><span class="t" style="left:749.76px;top:132.00px;font-size:9.4px;line-height:11px;color:#141414;letter-spacing:-0.280px;-webkit-text-stroke:.15px currentColor">180</span><span class="t" style="left:786.88px;top:132.00px;font-size:9.4px;line-height:11px;color:#141414;letter-spacing:-0.280px;-webkit-text-stroke:.15px currentColor">200</span><span class="t" style="left:824.88px;top:132.00px;font-size:9.4px;line-height:11px;color:#141414;letter-spacing:-0.280px;-webkit-text-stroke:.15px currentColor">220</span><span class="t" style="left:862.88px;top:132.00px;font-size:9.4px;line-height:11px;color:#141414;letter-spacing:-0.280px;-webkit-text-stroke:.15px currentColor">240</span><span class="t" style="left:899.88px;top:132.00px;font-size:9.4px;line-height:11px;color:#141414;letter-spacing:-0.280px;-webkit-text-stroke:.15px currentColor">260</span><span class="t" style="left:937.88px;top:132.00px;font-size:9.4px;line-height:11px;color:#141414;letter-spacing:-0.280px;-webkit-text-stroke:.15px currentColor">280</span><span class="t" style="left:975.94px;top:132.00px;font-size:9.4px;line-height:11px;color:#141414;letter-spacing:-0.280px;-webkit-text-stroke:.15px currentColor">300</span><span class="t" style="left:1012.94px;top:132.00px;font-size:9.4px;line-height:11px;color:#141414;letter-spacing:-0.280px;-webkit-text-stroke:.15px currentColor">320</span><span class="t" style="left:1050.94px;top:132.00px;font-size:9.4px;line-height:11px;color:#141414;letter-spacing:-0.280px;-webkit-text-stroke:.15px currentColor">340</span><span class="t" style="left:1087.94px;top:132.00px;font-size:9.4px;line-height:11px;color:#141414;letter-spacing:-0.280px;-webkit-text-stroke:.15px currentColor">360</span><span class="t" style="left:71.93px;top:700.80px;width:12.75px;height:12px;font-size:9.4px;line-height:12px;letter-spacing:-.28px;color:#141414;-webkit-text-stroke:.15px currentColor;transform:rotate(-90deg);transform-origin:50% 50%">-40</span><span class="t" style="left:71.93px;top:662.80px;width:12.75px;height:12px;font-size:9.4px;line-height:12px;letter-spacing:-.28px;color:#141414;-webkit-text-stroke:.15px currentColor;transform:rotate(-90deg);transform-origin:50% 50%">-20</span><span class="t" style="left:75.83px;top:624.80px;width:4.95px;height:12px;font-size:9.4px;line-height:12px;letter-spacing:-.28px;color:#141414;-webkit-text-stroke:.15px currentColor;transform:rotate(-90deg);transform-origin:50% 50%">0</span><span class="t" style="left:73.35px;top:587.80px;width:9.90px;height:12px;font-size:9.4px;line-height:12px;letter-spacing:-.28px;color:#141414;-webkit-text-stroke:.15px currentColor;transform:rotate(-90deg);transform-origin:50% 50%">20</span><span class="t" style="left:73.35px;top:549.80px;width:9.90px;height:12px;font-size:9.4px;line-height:12px;letter-spacing:-.28px;color:#141414;-webkit-text-stroke:.15px currentColor;transform:rotate(-90deg);transform-origin:50% 50%">40</span><span class="t" style="left:73.35px;top:511.80px;width:9.90px;height:12px;font-size:9.4px;line-height:12px;letter-spacing:-.28px;color:#141414;-webkit-text-stroke:.15px currentColor;transform:rotate(-90deg);transform-origin:50% 50%">60</span><span class="t" style="left:73.35px;top:474.80px;width:9.90px;height:12px;font-size:9.4px;line-height:12px;letter-spacing:-.28px;color:#141414;-webkit-text-stroke:.15px currentColor;transform:rotate(-90deg);transform-origin:50% 50%">80</span><span class="t" style="left:70.88px;top:436.80px;width:14.84px;height:12px;font-size:9.4px;line-height:12px;letter-spacing:-.28px;color:#141414;-webkit-text-stroke:.15px currentColor;transform:rotate(-90deg);transform-origin:50% 50%">100</span><span class="t" style="left:70.88px;top:398.80px;width:14.84px;height:12px;font-size:9.4px;line-height:12px;letter-spacing:-.28px;color:#141414;-webkit-text-stroke:.15px currentColor;transform:rotate(-90deg);transform-origin:50% 50%">120</span><span class="t" style="left:70.88px;top:361.80px;width:14.84px;height:12px;font-size:9.4px;line-height:12px;letter-spacing:-.28px;color:#141414;-webkit-text-stroke:.15px currentColor;transform:rotate(-90deg);transform-origin:50% 50%">140</span><span class="t" style="left:70.88px;top:323.80px;width:14.84px;height:12px;font-size:9.4px;line-height:12px;letter-spacing:-.28px;color:#141414;-webkit-text-stroke:.15px currentColor;transform:rotate(-90deg);transform-origin:50% 50%">160</span><span class="t" style="left:70.88px;top:285.80px;width:14.84px;height:12px;font-size:9.4px;line-height:12px;letter-spacing:-.28px;color:#141414;-webkit-text-stroke:.15px currentColor;transform:rotate(-90deg);transform-origin:50% 50%">180</span><span class="t" style="left:70.88px;top:248.80px;width:14.84px;height:12px;font-size:9.4px;line-height:12px;letter-spacing:-.28px;color:#141414;-webkit-text-stroke:.15px currentColor;transform:rotate(-90deg);transform-origin:50% 50%">200</span><span class="t" style="left:70.88px;top:210.80px;width:14.84px;height:12px;font-size:9.4px;line-height:12px;letter-spacing:-.28px;color:#141414;-webkit-text-stroke:.15px currentColor;transform:rotate(-90deg);transform-origin:50% 50%">220</span><span class="t" style="left:70.88px;top:172.80px;width:14.84px;height:12px;font-size:9.4px;line-height:12px;letter-spacing:-.28px;color:#141414;-webkit-text-stroke:.15px currentColor;transform:rotate(-90deg);transform-origin:50% 50%">240</span><svg id="canvas" class="cv" style="left:95.0px;top:155.0px;overflow:hidden" width="1023" height="577" viewBox="0 0 1023 577"><rect width="1023.0" height="577.0" fill="#000"/><path d="M135 0V577.0M323 0V577.0M511 0V577.0M700 0V577.0M888 0V577.0" stroke="#1b1b1b" stroke-width="1.600" fill="none"/><path d="M0 477.5H1023.0M0 288.5H1023.0M0 100.5H1023.0" stroke="#222" stroke-width="1" fill="none"/><path d="M3 6.5h1m18 0h1m18 0h1m17 0h1m18 0h1m18 0h1m18 0h1m18 0h1m18 0h1m17 0h1m18 0h1m18 0h1m18 0h1m18 0h1m17 0h1m18 0h1m18 0h1m18 0h1m18 0h1m18 0h1m17 0h1m18 0h1m18 0h1m18 0h1m18 0h1m18 0h1m17 0h1m18 0h1m18 0h1m18 0h1m18 0h1m18 0h1m17 0h1m18 0h1m18 0h1m18 0h1m18 0h1m18 0h1m17 0h1m18 0h1m18 0h1m18 0h1m18 0h1m18 0h1m17 0h1m18 0h1m18 0h1m18 0h1m18 0h1m17 0h1m18 0h1m18 0h1m18 0h1m18 0h1m18 0h1M3 25.5h1m18 0h1m18 0h1m17 0h1m18 0h1m18 0h1m18 0h1m18 0h1m18 0h1m17 0h1m18 0h1m18 0h1m18 0h1m18 0h1m17 0h1m18 0h1m18 0h1m18 0h1m18 0h1m18 0h1m17 0h1m18 0h1m18 0h1m18 0h1m18 0h1m18 0h1m17 0h1m18 0h1m18 0h1m18 0h1m18 0h1m18 0h1m17 0h1m18 0h1m18 0h1m18 0h1m18 0h1m18 0h1m17 0h1m18 0h1m18 0h1m18 0h1m18 0h1m18 0h1m17 0h1m18 0h1m18 0h1m18 0h1m18 0h1m17 0h1m18 0h1m18 0h1m18 0h1m18 0h1m18 0h1M3 43.5h1m18 0h1m18 0h1m17 0h1m18 0h1m18 0h1m18 0h1m18 0h1m18 0h1m17 0h1m18 0h1m18 0h1m18 0h1m18 0h1m17 0h1m18 0h1m18 0h1m18 0h1m18 0h1m18 0h1m17 0h1m18 0h1m18 0h1m18 0h1m18 0h1m18 0h1m17 0h1m18 0h1m18 0h1m18 0h1m18 0h1m18 0h1m17 0h1m18 0h1m18 0h1m18 0h1m18 0h1m18 0h1m17 0h1m18 0h1m18 0h1m18 0h1m18 0h1m18 0h1m17 0h1m18 0h1m18 0h1m18 0h1m18 0h1m17 0h1m18 0h1m18 0h1m18 0h1m18 0h1m18 0h1M3 62.5h1m18 0h1m18 0h1m17 0h1m18 0h1m18 0h1m18 0h1m18 0h1m18 0h1m17 0h1m18 0h1m18 0h1m18 0h1m18 0h1m17 0h1m18 0h1m18 0h1m18 0h1m18 0h1m18 0h1m17 0h1m18 0h1m18 0h1m18 0h1m18 0h1m18 0h1m17 0h1m18 0h1m18 0h1m18 0h1m18 0h1m18 0h1m17 0h1m18 0h1m18 0h1m18 0h1m18 0h1m18 0h1m17 0h1m18 0h1m18 0h1m18 0h1m18 0h1m18 0h1m17 0h1m18 0h1m18 0h1m18 0h1m18 0h1m17 0h1m18 0h1m18 0h1m18 0h1m18 0h1m18 0h1M3 81.5h1m18 0h1m18 0h1m17 0h1m18 0h1m18 0h1m18 0h1m18 0h1m18 0h1m17 0h1m18 0h1m18 0h1m18 0h1m18 0h1m17 0h1m18 0h1m18 0h1m18 0h1m18 0h1m18 0h1m17 0h1m18 0h1m18 0h1m18 0h1m18 0h1m18 0h1m17 0h1m18 0h1m18 0h1m18 0h1m18 0h1m18 0h1m17 0h1m18 0h1m18 0h1m18 0h1m18 0h1m18 0h1m17 0h1m18 0h1m18 0h1m18 0h1m18 0h1m18 0h1m17 0h1m18 0h1m18 0h1m18 0h1m18 0h1m17 0h1m18 0h1m18 0h1m18 0h1m18 0h1m18 0h1M3 100.5h1m18 0h1m18 0h1m17 0h1m18 0h1m18 0h1m18 0h1m18 0h1m18 0h1m17 0h1m18 0h1m18 0h1m18 0h1m18 0h1m17 0h1m18 0h1m18 0h1m18 0h1m18 0h1m18 0h1m17 0h1m18 0h1m18 0h1m18 0h1m18 0h1m18 0h1m17 0h1m18 0h1m18 0h1m18 0h1m18 0h1m18 0h1m17 0h1m18 0h1m18 0h1m18 0h1m18 0h1m18 0h1m17 0h1m18 0h1m18 0h1m18 0h1m18 0h1m18 0h1m17 0h1m18 0h1m18 0h1m18 0h1m18 0h1m17 0h1m18 0h1m18 0h1m18 0h1m18 0h1m18 0h1M3 119.5h1m18 0h1m18 0h1m17 0h1m18 0h1m18 0h1m18 0h1m18 0h1m18 0h1m17 0h1m18 0h1m18 0h1m18 0h1m18 0h1m17 0h1m18 0h1m18 0h1m18 0h1m18 0h1m18 0h1m17 0h1m18 0h1m18 0h1m18 0h1m18 0h1m18 0h1m17 0h1m18 0h1m18 0h1m18 0h1m18 0h1m18 0h1m17 0h1m18 0h1m18 0h1m18 0h1m18 0h1m18 0h1m17 0h1m18 0h1m18 0h1m18 0h1m18 0h1m18 0h1m17 0h1m18 0h1m18 0h1m18 0h1m18 0h1m17 0h1m18 0h1m18 0h1m18 0h1m18 0h1m18 0h1M3 138.5h1m18 0h1m18 0h1m17 0h1m18 0h1m18 0h1m18 0h1m18 0h1m18 0h1m17 0h1m18 0h1m18 0h1m18 0h1m18 0h1m17 0h1m18 0h1m18 0h1m18 0h1m18 0h1m18 0h1m17 0h1m18 0h1m18 0h1m18 0h1m18 0h1m18 0h1m17 0h1m18 0h1m18 0h1m18 0h1m18 0h1m18 0h1m17 0h1m18 0h1m18 0h1m18 0h1m18 0h1m18 0h1m17 0h1m18 0h1m18 0h1m18 0h1m18 0h1m18 0h1m17 0h1m18 0h1m18 0h1m18 0h1m18 0h1m17 0h1m18 0h1m18 0h1m18 0h1m18 0h1m18 0h1M3 156.5h1m18 0h1m18 0h1m17 0h1m18 0h1m18 0h1m18 0h1m18 0h1m18 0h1m17 0h1m18 0h1m18 0h1m18 0h1m18 0h1m17 0h1m18 0h1m18 0h1m18 0h1m18 0h1m18 0h1m17 0h1m18 0h1m18 0h1m18 0h1m18 0h1m18 0h1m17 0h1m18 0h1m18 0h1m18 0h1m18 0h1m18 0h1m17 0h1m18 0h1m18 0h1m18 0h1m18 0h1m18 0h1m17 0h1m18 0h1m18 0h1m18 0h1m18 0h1m18 0h1m17 0h1m18 0h1m18 0h1m18 0h1m18 0h1m17 0h1m18 0h1m18 0h1m18 0h1m18 0h1m18 0h1M3 175.5h1m18 0h1m18 0h1m17 0h1m18 0h1m18 0h1m18 0h1m18 0h1m18 0h1m17 0h1m18 0h1m18 0h1m18 0h1m18 0h1m17 0h1m18 0h1m18 0h1m18 0h1m18 0h1m18 0h1m17 0h1m18 0h1m18 0h1m18 0h1m18 0h1m18 0h1m17 0h1m18 0h1m18 0h1m18 0h1m18 0h1m18 0h1m17 0h1m18 0h1m18 0h1m18 0h1m18 0h1m18 0h1m17 0h1m18 0h1m18 0h1m18 0h1m18 0h1m18 0h1m17 0h1m18 0h1m18 0h1m18 0h1m18 0h1m17 0h1m18 0h1m18 0h1m18 0h1m18 0h1m18 0h1M3 194.5h1m18 0h1m18 0h1m17 0h1m18 0h1m18 0h1m18 0h1m18 0h1m18 0h1m17 0h1m18 0h1m18 0h1m18 0h1m18 0h1m17 0h1m18 0h1m18 0h1m18 0h1m18 0h1m18 0h1m17 0h1m18 0h1m18 0h1m18 0h1m18 0h1m18 0h1m17 0h1m18 0h1m18 0h1m18 0h1m18 0h1m18 0h1m17 0h1m18 0h1m18 0h1m18 0h1m18 0h1m18 0h1m17 0h1m18 0h1m18 0h1m18 0h1m18 0h1m18 0h1m17 0h1m18 0h1m18 0h1m18 0h1m18 0h1m17 0h1m18 0h1m18 0h1m18 0h1m18 0h1m18 0h1M3 213.5h1m18 0h1m18 0h1m17 0h1m18 0h1m18 0h1m18 0h1m18 0h1m18 0h1m17 0h1m18 0h1m18 0h1m18 0h1m18 0h1m17 0h1m18 0h1m18 0h1m18 0h1m18 0h1m18 0h1m17 0h1m18 0h1m18 0h1m18 0h1m18 0h1m18 0h1m17 0h1m18 0h1m18 0h1m18 0h1m18 0h1m18 0h1m17 0h1m18 0h1m18 0h1m18 0h1m18 0h1m18 0h1m17 0h1m18 0h1m18 0h1m18 0h1m18 0h1m18 0h1m17 0h1m18 0h1m18 0h1m18 0h1m18 0h1m17 0h1m18 0h1m18 0h1m18 0h1m18 0h1m18 0h1M3 232.5h1m18 0h1m18 0h1m17 0h1m18 0h1m18 0h1m18 0h1m18 0h1m18 0h1m17 0h1m18 0h1m18 0h1m18 0h1m18 0h1m17 0h1m18 0h1m18 0h1m18 0h1m18 0h1m18 0h1m17 0h1m18 0h1m18 0h1m18 0h1m18 0h1m18 0h1m17 0h1m18 0h1m18 0h1m18 0h1m18 0h1m18 0h1m17 0h1m18 0h1m18 0h1m18 0h1m18 0h1m18 0h1m17 0h1m18 0h1m18 0h1m18 0h1m18 0h1m18 0h1m17 0h1m18 0h1m18 0h1m18 0h1m18 0h1m17 0h1m18 0h1m18 0h1m18 0h1m18 0h1m18 0h1M3 251.5h1m18 0h1m18 0h1m17 0h1m18 0h1m18 0h1m18 0h1m18 0h1m18 0h1m17 0h1m18 0h1m18 0h1m18 0h1m18 0h1m17 0h1m18 0h1m18 0h1m18 0h1m18 0h1m18 0h1m17 0h1m18 0h1m18 0h1m18 0h1m18 0h1m18 0h1m17 0h1m18 0h1m18 0h1m18 0h1m18 0h1m18 0h1m17 0h1m18 0h1m18 0h1m18 0h1m18 0h1m18 0h1m17 0h1m18 0h1m18 0h1m18 0h1m18 0h1m18 0h1m17 0h1m18 0h1m18 0h1m18 0h1m18 0h1m17 0h1m18 0h1m18 0h1m18 0h1m18 0h1m18 0h1M3 269.5h1m18 0h1m18 0h1m17 0h1m18 0h1m18 0h1m18 0h1m18 0h1m18 0h1m17 0h1m18 0h1m18 0h1m18 0h1m18 0h1m17 0h1m18 0h1m18 0h1m18 0h1m18 0h1m18 0h1m17 0h1m18 0h1m18 0h1m18 0h1m18 0h1m18 0h1m17 0h1m18 0h1m18 0h1m18 0h1m18 0h1m18 0h1m17 0h1m18 0h1m18 0h1m18 0h1m18 0h1m18 0h1m17 0h1m18 0h1m18 0h1m18 0h1m18 0h1m18 0h1m17 0h1m18 0h1m18 0h1m18 0h1m18 0h1m17 0h1m18 0h1m18 0h1m18 0h1m18 0h1m18 0h1M3 288.5h1m18 0h1m18 0h1m17 0h1m18 0h1m18 0h1m18 0h1m18 0h1m18 0h1m17 0h1m18 0h1m18 0h1m18 0h1m18 0h1m17 0h1m18 0h1m18 0h1m18 0h1m18 0h1m18 0h1m17 0h1m18 0h1m18 0h1m18 0h1m18 0h1m18 0h1m17 0h1m18 0h1m18 0h1m18 0h1m18 0h1m18 0h1m17 0h1m18 0h1m18 0h1m18 0h1m18 0h1m18 0h1m17 0h1m18 0h1m18 0h1m18 0h1m18 0h1m18 0h1m17 0h1m18 0h1m18 0h1m18 0h1m18 0h1m17 0h1m18 0h1m18 0h1m18 0h1m18 0h1m18 0h1M3 307.5h1m18 0h1m18 0h1m17 0h1m18 0h1m18 0h1m18 0h1m18 0h1m18 0h1m17 0h1m18 0h1m18 0h1m18 0h1m18 0h1m17 0h1m18 0h1m18 0h1m18 0h1m18 0h1m18 0h1m17 0h1m18 0h1m18 0h1m18 0h1m18 0h1m18 0h1m17 0h1m18 0h1m18 0h1m18 0h1m18 0h1m18 0h1m17 0h1m18 0h1m18 0h1m18 0h1m18 0h1m18 0h1m17 0h1m18 0h1m18 0h1m18 0h1m18 0h1m18 0h1m17 0h1m18 0h1m18 0h1m18 0h1m18 0h1m17 0h1m18 0h1m18 0h1m18 0h1m18 0h1m18 0h1M3 326.5h1m18 0h1m18 0h1m17 0h1m18 0h1m18 0h1m18 0h1m18 0h1m18 0h1m17 0h1m18 0h1m18 0h1m18 0h1m18 0h1m17 0h1m18 0h1m18 0h1m18 0h1m18 0h1m18 0h1m17 0h1m18 0h1m18 0h1m18 0h1m18 0h1m18 0h1m17 0h1m18 0h1m18 0h1m18 0h1m18 0h1m18 0h1m17 0h1m18 0h1m18 0h1m18 0h1m18 0h1m18 0h1m17 0h1m18 0h1m18 0h1m18 0h1m18 0h1m18 0h1m17 0h1m18 0h1m18 0h1m18 0h1m18 0h1m17 0h1m18 0h1m18 0h1m18 0h1m18 0h1m18 0h1M3 345.5h1m18 0h1m18 0h1m17 0h1m18 0h1m18 0h1m18 0h1m18 0h1m18 0h1m17 0h1m18 0h1m18 0h1m18 0h1m18 0h1m17 0h1m18 0h1m18 0h1m18 0h1m18 0h1m18 0h1m17 0h1m18 0h1m18 0h1m18 0h1m18 0h1m18 0h1m17 0h1m18 0h1m18 0h1m18 0h1m18 0h1m18 0h1m17 0h1m18 0h1m18 0h1m18 0h1m18 0h1m18 0h1m17 0h1m18 0h1m18 0h1m18 0h1m18 0h1m18 0h1m17 0h1m18 0h1m18 0h1m18 0h1m18 0h1m17 0h1m18 0h1m18 0h1m18 0h1m18 0h1m18 0h1M3 364.5h1m18 0h1m18 0h1m17 0h1m18 0h1m18 0h1m18 0h1m18 0h1m18 0h1m17 0h1m18 0h1m18 0h1m18 0h1m18 0h1m17 0h1m18 0h1m18 0h1m18 0h1m18 0h1m18 0h1m17 0h1m18 0h1m18 0h1m18 0h1m18 0h1m18 0h1m17 0h1m18 0h1m18 0h1m18 0h1m18 0h1m18 0h1m17 0h1m18 0h1m18 0h1m18 0h1m18 0h1m18 0h1m17 0h1m18 0h1m18 0h1m18 0h1m18 0h1m18 0h1m17 0h1m18 0h1m18 0h1m18 0h1m18 0h1m17 0h1m18 0h1m18 0h1m18 0h1m18 0h1m18 0h1M3 382.5h1m18 0h1m18 0h1m17 0h1m18 0h1m18 0h1m18 0h1m18 0h1m18 0h1m17 0h1m18 0h1m18 0h1m18 0h1m18 0h1m17 0h1m18 0h1m18 0h1m18 0h1m18 0h1m18 0h1m17 0h1m18 0h1m18 0h1m18 0h1m18 0h1m18 0h1m17 0h1m18 0h1m18 0h1m18 0h1m18 0h1m18 0h1m17 0h1m18 0h1m18 0h1m18 0h1m18 0h1m18 0h1m17 0h1m18 0h1m18 0h1m18 0h1m18 0h1m18 0h1m17 0h1m18 0h1m18 0h1m18 0h1m18 0h1m17 0h1m18 0h1m18 0h1m18 0h1m18 0h1m18 0h1M3 401.5h1m18 0h1m18 0h1m17 0h1m18 0h1m18 0h1m18 0h1m18 0h1m18 0h1m17 0h1m18 0h1m18 0h1m18 0h1m18 0h1m17 0h1m18 0h1m18 0h1m18 0h1m18 0h1m18 0h1m17 0h1m18 0h1m18 0h1m18 0h1m18 0h1m18 0h1m17 0h1m18 0h1m18 0h1m18 0h1m18 0h1m18 0h1m17 0h1m18 0h1m18 0h1m18 0h1m18 0h1m18 0h1m17 0h1m18 0h1m18 0h1m18 0h1m18 0h1m18 0h1m17 0h1m18 0h1m18 0h1m18 0h1m18 0h1m17 0h1m18 0h1m18 0h1m18 0h1m18 0h1m18 0h1M3 420.5h1m18 0h1m18 0h1m17 0h1m18 0h1m18 0h1m18 0h1m18 0h1m18 0h1m17 0h1m18 0h1m18 0h1m18 0h1m18 0h1m17 0h1m18 0h1m18 0h1m18 0h1m18 0h1m18 0h1m17 0h1m18 0h1m18 0h1m18 0h1m18 0h1m18 0h1m17 0h1m18 0h1m18 0h1m18 0h1m18 0h1m18 0h1m17 0h1m18 0h1m18 0h1m18 0h1m18 0h1m18 0h1m17 0h1m18 0h1m18 0h1m18 0h1m18 0h1m18 0h1m17 0h1m18 0h1m18 0h1m18 0h1m18 0h1m17 0h1m18 0h1m18 0h1m18 0h1m18 0h1m18 0h1M3 439.5h1m18 0h1m18 0h1m17 0h1m18 0h1m18 0h1m18 0h1m18 0h1m18 0h1m17 0h1m18 0h1m18 0h1m18 0h1m18 0h1m17 0h1m18 0h1m18 0h1m18 0h1m18 0h1m18 0h1m17 0h1m18 0h1m18 0h1m18 0h1m18 0h1m18 0h1m17 0h1m18 0h1m18 0h1m18 0h1m18 0h1m18 0h1m17 0h1m18 0h1m18 0h1m18 0h1m18 0h1m18 0h1m17 0h1m18 0h1m18 0h1m18 0h1m18 0h1m18 0h1m17 0h1m18 0h1m18 0h1m18 0h1m18 0h1m17 0h1m18 0h1m18 0h1m18 0h1m18 0h1m18 0h1M3 458.5h1m18 0h1m18 0h1m17 0h1m18 0h1m18 0h1m18 0h1m18 0h1m18 0h1m17 0h1m18 0h1m18 0h1m18 0h1m18 0h1m17 0h1m18 0h1m18 0h1m18 0h1m18 0h1m18 0h1m17 0h1m18 0h1m18 0h1m18 0h1m18 0h1m18 0h1m17 0h1m18 0h1m18 0h1m18 0h1m18 0h1m18 0h1m17 0h1m18 0h1m18 0h1m18 0h1m18 0h1m18 0h1m17 0h1m18 0h1m18 0h1m18 0h1m18 0h1m18 0h1m17 0h1m18 0h1m18 0h1m18 0h1m18 0h1m17 0h1m18 0h1m18 0h1m18 0h1m18 0h1m18 0h1M3 477.5h1m18 0h1m18 0h1m17 0h1m18 0h1m18 0h1m18 0h1m18 0h1m18 0h1m17 0h1m18 0h1m18 0h1m18 0h1m18 0h1m17 0h1m18 0h1m18 0h1m18 0h1m18 0h1m18 0h1m17 0h1m18 0h1m18 0h1m18 0h1m18 0h1m18 0h1m17 0h1m18 0h1m18 0h1m18 0h1m18 0h1m18 0h1m17 0h1m18 0h1m18 0h1m18 0h1m18 0h1m18 0h1m17 0h1m18 0h1m18 0h1m18 0h1m18 0h1m18 0h1m17 0h1m18 0h1m18 0h1m18 0h1m18 0h1m17 0h1m18 0h1m18 0h1m18 0h1m18 0h1m18 0h1M3 495.5h1m18 0h1m18 0h1m17 0h1m18 0h1m18 0h1m18 0h1m18 0h1m18 0h1m17 0h1m18 0h1m18 0h1m18 0h1m18 0h1m17 0h1m18 0h1m18 0h1m18 0h1m18 0h1m18 0h1m17 0h1m18 0h1m18 0h1m18 0h1m18 0h1m18 0h1m17 0h1m18 0h1m18 0h1m18 0h1m18 0h1m18 0h1m17 0h1m18 0h1m18 0h1m18 0h1m18 0h1m18 0h1m17 0h1m18 0h1m18 0h1m18 0h1m18 0h1m18 0h1m17 0h1m18 0h1m18 0h1m18 0h1m18 0h1m17 0h1m18 0h1m18 0h1m18 0h1m18 0h1m18 0h1M3 514.5h1m18 0h1m18 0h1m17 0h1m18 0h1m18 0h1m18 0h1m18 0h1m18 0h1m17 0h1m18 0h1m18 0h1m18 0h1m18 0h1m17 0h1m18 0h1m18 0h1m18 0h1m18 0h1m18 0h1m17 0h1m18 0h1m18 0h1m18 0h1m18 0h1m18 0h1m17 0h1m18 0h1m18 0h1m18 0h1m18 0h1m18 0h1m17 0h1m18 0h1m18 0h1m18 0h1m18 0h1m18 0h1m17 0h1m18 0h1m18 0h1m18 0h1m18 0h1m18 0h1m17 0h1m18 0h1m18 0h1m18 0h1m18 0h1m17 0h1m18 0h1m18 0h1m18 0h1m18 0h1m18 0h1M3 533.5h1m18 0h1m18 0h1m17 0h1m18 0h1m18 0h1m18 0h1m18 0h1m18 0h1m17 0h1m18 0h1m18 0h1m18 0h1m18 0h1m17 0h1m18 0h1m18 0h1m18 0h1m18 0h1m18 0h1m17 0h1m18 0h1m18 0h1m18 0h1m18 0h1m18 0h1m17 0h1m18 0h1m18 0h1m18 0h1m18 0h1m18 0h1m17 0h1m18 0h1m18 0h1m18 0h1m18 0h1m18 0h1m17 0h1m18 0h1m18 0h1m18 0h1m18 0h1m18 0h1m17 0h1m18 0h1m18 0h1m18 0h1m18 0h1m17 0h1m18 0h1m18 0h1m18 0h1m18 0h1m18 0h1M3 552.5h1m18 0h1m18 0h1m17 0h1m18 0h1m18 0h1m18 0h1m18 0h1m18 0h1m17 0h1m18 0h1m18 0h1m18 0h1m18 0h1m17 0h1m18 0h1m18 0h1m18 0h1m18 0h1m18 0h1m17 0h1m18 0h1m18 0h1m18 0h1m18 0h1m18 0h1m17 0h1m18 0h1m18 0h1m18 0h1m18 0h1m18 0h1m17 0h1m18 0h1m18 0h1m18 0h1m18 0h1m18 0h1m17 0h1m18 0h1m18 0h1m18 0h1m18 0h1m18 0h1m17 0h1m18 0h1m18 0h1m18 0h1m18 0h1m17 0h1m18 0h1m18 0h1m18 0h1m18 0h1m18 0h1M3 571.5h1m18 0h1m18 0h1m17 0h1m18 0h1m18 0h1m18 0h1m18 0h1m18 0h1m17 0h1m18 0h1m18 0h1m18 0h1m18 0h1m17 0h1m18 0h1m18 0h1m18 0h1m18 0h1m18 0h1m17 0h1m18 0h1m18 0h1m18 0h1m18 0h1m18 0h1m17 0h1m18 0h1m18 0h1m18 0h1m18 0h1m18 0h1m17 0h1m18 0h1m18 0h1m18 0h1m18 0h1m18 0h1m17 0h1m18 0h1m18 0h1m18 0h1m18 0h1m18 0h1m17 0h1m18 0h1m18 0h1m18 0h1m18 0h1m17 0h1m18 0h1m18 0h1m18 0h1m18 0h1m18 0h1" stroke="#474747" stroke-width="1" fill="none"/><path d="M303.5 477.5h40M323.5 457.5v40" stroke="#a80000" stroke-width="1" fill="none"/><circle cx="323.5" cy="477.5" r="5.300" stroke="#a80000" stroke-width="1" fill="none"/><circle cx="511.76" cy="288.62" r="188.28" fill="none" stroke="#d9d9d9" stroke-width="1"/><circle cx="511.76" cy="288.62" r="169.45" fill="none" stroke="#d9d9d9" stroke-width="1"/><circle cx="511.76" cy="288.62" r="158.16" fill="none" stroke="#64302a" stroke-width=".9"/><circle cx="511.76" cy="288.62" r="146.86" fill="none" stroke="#64302a" stroke-width=".9"/><text transform="translate(572.8 194.1) scale(.94 1)" text-anchor="middle" font-family="Liberation Serif,serif" font-size="33.700" fill="#7a3832">1</text><text transform="translate(617.5 238.9) scale(.94 1)" text-anchor="middle" font-family="Liberation Serif,serif" font-size="33.700" fill="#7a3832">2</text><text transform="translate(633.9 300.1) scale(.94 1)" text-anchor="middle" font-family="Liberation Serif,serif" font-size="33.700" fill="#7a3832">3</text><text transform="translate(617.5 361.3) scale(.94 1)" text-anchor="middle" font-family="Liberation Serif,serif" font-size="33.700" fill="#7a3832">4</text><text transform="translate(572.8 406.1) scale(.94 1)" text-anchor="middle" font-family="Liberation Serif,serif" font-size="33.700" fill="#7a3832">5</text><text transform="translate(511.6 422.5) scale(.94 1)" text-anchor="middle" font-family="Liberation Serif,serif" font-size="33.700" fill="#7a3832">6</text><text transform="translate(450.4 406.1) scale(.94 1)" text-anchor="middle" font-family="Liberation Serif,serif" font-size="33.700" fill="#7a3832">7</text><text transform="translate(405.6 361.3) scale(.94 1)" text-anchor="middle" font-family="Liberation Serif,serif" font-size="33.700" fill="#7a3832">8</text><text transform="translate(389.2 300.1) scale(.94 1)" text-anchor="middle" font-family="Liberation Serif,serif" font-size="33.700" fill="#7a3832">9</text><text transform="translate(405.6 238.9) scale(.94 1)" text-anchor="middle" font-family="Liberation Serif,serif" font-size="33.700" fill="#7a3832">10</text><text transform="translate(450.4 194.1) scale(.94 1)" text-anchor="middle" font-family="Liberation Serif,serif" font-size="33.700" fill="#7a3832">11</text><text transform="translate(511.6 177.7) scale(.94 1)" text-anchor="middle" font-family="Liberation Serif,serif" font-size="33.700" fill="#7a3832">12</text><rect x="653.92" y="283.92" width="9.400" height="9.400" fill="#bd0021" stroke="#b87882" stroke-width=".7"/><rect x="653.11" y="268.57" width="9.400" height="9.400" fill="#bd0021" stroke="#b87882" stroke-width=".7"/><rect x="650.71" y="253.39" width="9.400" height="9.400" fill="#bd0021" stroke="#b87882" stroke-width=".7"/><rect x="646.73" y="238.54" width="9.400" height="9.400" fill="#bd0021" stroke="#b87882" stroke-width=".7"/><rect x="641.22" y="224.19" width="9.400" height="9.400" fill="#bd0021" stroke="#b87882" stroke-width=".7"/><rect x="634.24" y="210.49" width="9.400" height="9.400" fill="#bd0021" stroke="#b87882" stroke-width=".7"/><rect x="625.87" y="197.60" width="9.400" height="9.400" fill="#bd0021" stroke="#b87882" stroke-width=".7"/><rect x="616.20" y="185.65" width="9.400" height="9.400" fill="#bd0021" stroke="#b87882" stroke-width=".7"/><rect x="605.33" y="174.78" width="9.400" height="9.400" fill="#bd0021" stroke="#b87882" stroke-width=".7"/><rect x="593.38" y="165.11" width="9.400" height="9.400" fill="#bd0021" stroke="#b87882" stroke-width=".7"/><rect x="580.49" y="156.74" width="9.400" height="9.400" fill="#bd0021" stroke="#b87882" stroke-width=".7"/><rect x="566.79" y="149.76" width="9.400" height="9.400" fill="#bd0021" stroke="#b87882" stroke-width=".7"/><rect x="552.44" y="144.25" width="9.400" height="9.400" fill="#bd0021" stroke="#b87882" stroke-width=".7"/><rect x="537.59" y="140.27" width="9.400" height="9.400" fill="#bd0021" stroke="#b87882" stroke-width=".7"/><rect x="522.41" y="137.87" width="9.400" height="9.400" fill="#bd0021" stroke="#b87882" stroke-width=".7"/><rect x="507.06" y="137.06" width="9.400" height="9.400" fill="#bd0021" stroke="#b87882" stroke-width=".7"/><rect x="491.71" y="137.87" width="9.400" height="9.400" fill="#bd0021" stroke="#b87882" stroke-width=".7"/><rect x="476.53" y="140.27" width="9.400" height="9.400" fill="#bd0021" stroke="#b87882" stroke-width=".7"/><rect x="461.68" y="144.25" width="9.400" height="9.400" fill="#bd0021" stroke="#b87882" stroke-width=".7"/><rect x="447.33" y="149.76" width="9.400" height="9.400" fill="#bd0021" stroke="#b87882" stroke-width=".7"/><rect x="433.63" y="156.74" width="9.400" height="9.400" fill="#bd0021" stroke="#b87882" stroke-width=".7"/><rect x="420.74" y="165.11" width="9.400" height="9.400" fill="#bd0021" stroke="#b87882" stroke-width=".7"/><rect x="408.79" y="174.78" width="9.400" height="9.400" fill="#bd0021" stroke="#b87882" stroke-width=".7"/><rect x="397.92" y="185.65" width="9.400" height="9.400" fill="#bd0021" stroke="#b87882" stroke-width=".7"/><rect x="388.25" y="197.60" width="9.400" height="9.400" fill="#bd0021" stroke="#b87882" stroke-width=".7"/><rect x="379.88" y="210.49" width="9.400" height="9.400" fill="#bd0021" stroke="#b87882" stroke-width=".7"/><rect x="372.90" y="224.19" width="9.400" height="9.400" fill="#bd0021" stroke="#b87882" stroke-width=".7"/><rect x="367.39" y="238.54" width="9.400" height="9.400" fill="#bd0021" stroke="#b87882" stroke-width=".7"/><rect x="363.41" y="253.39" width="9.400" height="9.400" fill="#bd0021" stroke="#b87882" stroke-width=".7"/><rect x="361.01" y="268.57" width="9.400" height="9.400" fill="#bd0021" stroke="#b87882" stroke-width=".7"/><rect x="360.20" y="283.92" width="9.400" height="9.400" fill="#bd0021" stroke="#b87882" stroke-width=".7"/><rect x="361.01" y="299.27" width="9.400" height="9.400" fill="#bd0021" stroke="#b87882" stroke-width=".7"/><rect x="363.41" y="314.45" width="9.400" height="9.400" fill="#bd0021" stroke="#b87882" stroke-width=".7"/><rect x="367.39" y="329.30" width="9.400" height="9.400" fill="#bd0021" stroke="#b87882" stroke-width=".7"/><rect x="372.90" y="343.65" width="9.400" height="9.400" fill="#bd0021" stroke="#b87882" stroke-width=".7"/><rect x="379.88" y="357.35" width="9.400" height="9.400" fill="#bd0021" stroke="#b87882" stroke-width=".7"/><rect x="388.25" y="370.24" width="9.400" height="9.400" fill="#bd0021" stroke="#b87882" stroke-width=".7"/><rect x="397.92" y="382.19" width="9.400" height="9.400" fill="#bd0021" stroke="#b87882" stroke-width=".7"/><rect x="408.79" y="393.06" width="9.400" height="9.400" fill="#bd0021" stroke="#b87882" stroke-width=".7"/><rect x="420.74" y="402.73" width="9.400" height="9.400" fill="#bd0021" stroke="#b87882" stroke-width=".7"/><rect x="433.63" y="411.10" width="9.400" height="9.400" fill="#bd0021" stroke="#b87882" stroke-width=".7"/><rect x="447.33" y="418.08" width="9.400" height="9.400" fill="#bd0021" stroke="#b87882" stroke-width=".7"/><rect x="461.68" y="423.59" width="9.400" height="9.400" fill="#bd0021" stroke="#b87882" stroke-width=".7"/><rect x="476.53" y="427.57" width="9.400" height="9.400" fill="#bd0021" stroke="#b87882" stroke-width=".7"/><rect x="491.71" y="429.97" width="9.400" height="9.400" fill="#bd0021" stroke="#b87882" stroke-width=".7"/><rect x="507.06" y="430.78" width="9.400" height="9.400" fill="#bd0021" stroke="#b87882" stroke-width=".7"/><rect x="522.41" y="429.97" width="9.400" height="9.400" fill="#bd0021" stroke="#b87882" stroke-width=".7"/><rect x="537.59" y="427.57" width="9.400" height="9.400" fill="#bd0021" stroke="#b87882" stroke-width=".7"/><rect x="552.44" y="423.59" width="9.400" height="9.400" fill="#bd0021" stroke="#b87882" stroke-width=".7"/><rect x="566.79" y="418.08" width="9.400" height="9.400" fill="#bd0021" stroke="#b87882" stroke-width=".7"/><rect x="580.49" y="411.10" width="9.400" height="9.400" fill="#bd0021" stroke="#b87882" stroke-width=".7"/><rect x="593.38" y="402.73" width="9.400" height="9.400" fill="#bd0021" stroke="#b87882" stroke-width=".7"/><rect x="605.33" y="393.06" width="9.400" height="9.400" fill="#bd0021" stroke="#b87882" stroke-width=".7"/><rect x="616.20" y="382.19" width="9.400" height="9.400" fill="#bd0021" stroke="#b87882" stroke-width=".7"/><rect x="625.87" y="370.24" width="9.400" height="9.400" fill="#bd0021" stroke="#b87882" stroke-width=".7"/><rect x="634.24" y="357.35" width="9.400" height="9.400" fill="#bd0021" stroke="#b87882" stroke-width=".7"/><rect x="641.22" y="343.65" width="9.400" height="9.400" fill="#bd0021" stroke="#b87882" stroke-width=".7"/><rect x="646.73" y="329.30" width="9.400" height="9.400" fill="#bd0021" stroke="#b87882" stroke-width=".7"/><rect x="650.71" y="314.45" width="9.400" height="9.400" fill="#bd0021" stroke="#b87882" stroke-width=".7"/><rect x="653.11" y="299.27" width="9.400" height="9.400" fill="#bd0021" stroke="#b87882" stroke-width=".7"/><rect x="507.06" y="340.40" width="9.400" height="9.400" fill="#bd0021" stroke="#b87882" stroke-width=".7"/><rect x="512.96" y="340.09" width="9.400" height="9.400" fill="#bd0021" stroke="#b87882" stroke-width=".7"/><rect x="518.80" y="339.17" width="9.400" height="9.400" fill="#bd0021" stroke="#b87882" stroke-width=".7"/><rect x="524.51" y="337.64" width="9.400" height="9.400" fill="#bd0021" stroke="#b87882" stroke-width=".7"/><rect x="530.03" y="335.52" width="9.400" height="9.400" fill="#bd0021" stroke="#b87882" stroke-width=".7"/><rect x="535.30" y="332.84" width="9.400" height="9.400" fill="#bd0021" stroke="#b87882" stroke-width=".7"/><rect x="540.26" y="329.62" width="9.400" height="9.400" fill="#bd0021" stroke="#b87882" stroke-width=".7"/><rect x="544.86" y="325.90" width="9.400" height="9.400" fill="#bd0021" stroke="#b87882" stroke-width=".7"/><rect x="549.04" y="321.72" width="9.400" height="9.400" fill="#bd0021" stroke="#b87882" stroke-width=".7"/><rect x="552.76" y="317.12" width="9.400" height="9.400" fill="#bd0021" stroke="#b87882" stroke-width=".7"/><rect x="555.98" y="312.16" width="9.400" height="9.400" fill="#bd0021" stroke="#b87882" stroke-width=".7"/><rect x="558.66" y="306.89" width="9.400" height="9.400" fill="#bd0021" stroke="#b87882" stroke-width=".7"/><rect x="560.78" y="301.37" width="9.400" height="9.400" fill="#bd0021" stroke="#b87882" stroke-width=".7"/><rect x="562.31" y="295.66" width="9.400" height="9.400" fill="#bd0021" stroke="#b87882" stroke-width=".7"/><rect x="563.23" y="289.82" width="9.400" height="9.400" fill="#bd0021" stroke="#b87882" stroke-width=".7"/><rect x="563.54" y="283.92" width="9.400" height="9.400" fill="#bd0021" stroke="#b87882" stroke-width=".7"/><rect x="563.23" y="278.02" width="9.400" height="9.400" fill="#bd0021" stroke="#b87882" stroke-width=".7"/><rect x="562.31" y="272.18" width="9.400" height="9.400" fill="#bd0021" stroke="#b87882" stroke-width=".7"/><rect x="560.78" y="266.47" width="9.400" height="9.400" fill="#bd0021" stroke="#b87882" stroke-width=".7"/><rect x="558.66" y="260.95" width="9.400" height="9.400" fill="#bd0021" stroke="#b87882" stroke-width=".7"/><rect x="555.98" y="255.68" width="9.400" height="9.400" fill="#bd0021" stroke="#b87882" stroke-width=".7"/><rect x="552.76" y="250.72" width="9.400" height="9.400" fill="#bd0021" stroke="#b87882" stroke-width=".7"/><rect x="549.04" y="246.12" width="9.400" height="9.400" fill="#bd0021" stroke="#b87882" stroke-width=".7"/><rect x="544.86" y="241.94" width="9.400" height="9.400" fill="#bd0021" stroke="#b87882" stroke-width=".7"/><rect x="540.26" y="238.22" width="9.400" height="9.400" fill="#bd0021" stroke="#b87882" stroke-width=".7"/><rect x="535.30" y="235.00" width="9.400" height="9.400" fill="#bd0021" stroke="#b87882" stroke-width=".7"/><rect x="530.03" y="232.32" width="9.400" height="9.400" fill="#bd0021" stroke="#b87882" stroke-width=".7"/><rect x="524.51" y="230.20" width="9.400" height="9.400" fill="#bd0021" stroke="#b87882" stroke-width=".7"/><rect x="518.80" y="228.67" width="9.400" height="9.400" fill="#bd0021" stroke="#b87882" stroke-width=".7"/><rect x="512.96" y="227.75" width="9.400" height="9.400" fill="#bd0021" stroke="#b87882" stroke-width=".7"/><rect x="507.06" y="227.44" width="9.400" height="9.400" fill="#bd0021" stroke="#b87882" stroke-width=".7"/><rect x="501.16" y="227.75" width="9.400" height="9.400" fill="#bd0021" stroke="#b87882" stroke-width=".7"/><rect x="495.32" y="228.67" width="9.400" height="9.400" fill="#bd0021" stroke="#b87882" stroke-width=".7"/><rect x="489.61" y="230.20" width="9.400" height="9.400" fill="#bd0021" stroke="#b87882" stroke-width=".7"/><rect x="484.09" y="232.32" width="9.400" height="9.400" fill="#bd0021" stroke="#b87882" stroke-width=".7"/><rect x="478.82" y="235.00" width="9.400" height="9.400" fill="#bd0021" stroke="#b87882" stroke-width=".7"/><rect x="473.86" y="238.22" width="9.400" height="9.400" fill="#bd0021" stroke="#b87882" stroke-width=".7"/><rect x="469.26" y="241.94" width="9.400" height="9.400" fill="#bd0021" stroke="#b87882" stroke-width=".7"/><rect x="465.08" y="246.12" width="9.400" height="9.400" fill="#bd0021" stroke="#b87882" stroke-width=".7"/><rect x="461.36" y="250.72" width="9.400" height="9.400" fill="#bd0021" stroke="#b87882" stroke-width=".7"/><rect x="458.14" y="255.68" width="9.400" height="9.400" fill="#bd0021" stroke="#b87882" stroke-width=".7"/><rect x="455.46" y="260.95" width="9.400" height="9.400" fill="#bd0021" stroke="#b87882" stroke-width=".7"/><rect x="453.34" y="266.47" width="9.400" height="9.400" fill="#bd0021" stroke="#b87882" stroke-width=".7"/><rect x="451.81" y="272.18" width="9.400" height="9.400" fill="#bd0021" stroke="#b87882" stroke-width=".7"/><rect x="450.89" y="278.02" width="9.400" height="9.400" fill="#bd0021" stroke="#b87882" stroke-width=".7"/><rect x="450.58" y="283.92" width="9.400" height="9.400" fill="#bd0021" stroke="#b87882" stroke-width=".7"/><rect x="450.89" y="289.82" width="9.400" height="9.400" fill="#bd0021" stroke="#b87882" stroke-width=".7"/><rect x="451.81" y="295.66" width="9.400" height="9.400" fill="#bd0021" stroke="#b87882" stroke-width=".7"/><rect x="453.34" y="301.37" width="9.400" height="9.400" fill="#bd0021" stroke="#b87882" stroke-width=".7"/><rect x="455.46" y="306.89" width="9.400" height="9.400" fill="#bd0021" stroke="#b87882" stroke-width=".7"/><rect x="458.14" y="312.16" width="9.400" height="9.400" fill="#bd0021" stroke="#b87882" stroke-width=".7"/><rect x="461.36" y="317.12" width="9.400" height="9.400" fill="#bd0021" stroke="#b87882" stroke-width=".7"/><rect x="465.08" y="321.72" width="9.400" height="9.400" fill="#bd0021" stroke="#b87882" stroke-width=".7"/><rect x="469.26" y="325.90" width="9.400" height="9.400" fill="#bd0021" stroke="#b87882" stroke-width=".7"/><rect x="473.86" y="329.62" width="9.400" height="9.400" fill="#bd0021" stroke="#b87882" stroke-width=".7"/><rect x="478.82" y="332.84" width="9.400" height="9.400" fill="#bd0021" stroke="#b87882" stroke-width=".7"/><rect x="484.09" y="335.52" width="9.400" height="9.400" fill="#bd0021" stroke="#b87882" stroke-width=".7"/><rect x="489.61" y="337.64" width="9.400" height="9.400" fill="#bd0021" stroke="#b87882" stroke-width=".7"/><rect x="495.32" y="339.17" width="9.400" height="9.400" fill="#bd0021" stroke="#b87882" stroke-width=".7"/><rect x="501.16" y="340.09" width="9.400" height="9.400" fill="#bd0021" stroke="#b87882" stroke-width=".7"/><rect x="665.22" y="283.92" width="9.400" height="9.400" fill="#0000ae" stroke="#7373b4" stroke-width=".7"/><rect x="664.35" y="267.39" width="9.400" height="9.400" fill="#0000ae" stroke="#7373b4" stroke-width=".7"/><rect x="661.76" y="251.04" width="9.400" height="9.400" fill="#0000ae" stroke="#7373b4" stroke-width=".7"/><rect x="657.47" y="235.05" width="9.400" height="9.400" fill="#0000ae" stroke="#7373b4" stroke-width=".7"/><rect x="651.54" y="219.59" width="9.400" height="9.400" fill="#0000ae" stroke="#7373b4" stroke-width=".7"/><rect x="644.03" y="204.84" width="9.400" height="9.400" fill="#0000ae" stroke="#7373b4" stroke-width=".7"/><rect x="635.01" y="190.96" width="9.400" height="9.400" fill="#0000ae" stroke="#7373b4" stroke-width=".7"/><rect x="624.59" y="178.09" width="9.400" height="9.400" fill="#0000ae" stroke="#7373b4" stroke-width=".7"/><rect x="612.89" y="166.39" width="9.400" height="9.400" fill="#0000ae" stroke="#7373b4" stroke-width=".7"/><rect x="600.02" y="155.97" width="9.400" height="9.400" fill="#0000ae" stroke="#7373b4" stroke-width=".7"/><rect x="586.14" y="146.95" width="9.400" height="9.400" fill="#0000ae" stroke="#7373b4" stroke-width=".7"/><rect x="571.39" y="139.44" width="9.400" height="9.400" fill="#0000ae" stroke="#7373b4" stroke-width=".7"/><rect x="555.93" y="133.51" width="9.400" height="9.400" fill="#0000ae" stroke="#7373b4" stroke-width=".7"/><rect x="539.94" y="129.22" width="9.400" height="9.400" fill="#0000ae" stroke="#7373b4" stroke-width=".7"/><rect x="523.59" y="126.63" width="9.400" height="9.400" fill="#0000ae" stroke="#7373b4" stroke-width=".7"/><rect x="507.06" y="125.76" width="9.400" height="9.400" fill="#0000ae" stroke="#7373b4" stroke-width=".7"/><rect x="490.53" y="126.63" width="9.400" height="9.400" fill="#0000ae" stroke="#7373b4" stroke-width=".7"/><rect x="474.18" y="129.22" width="9.400" height="9.400" fill="#0000ae" stroke="#7373b4" stroke-width=".7"/><rect x="458.19" y="133.51" width="9.400" height="9.400" fill="#0000ae" stroke="#7373b4" stroke-width=".7"/><rect x="442.73" y="139.44" width="9.400" height="9.400" fill="#0000ae" stroke="#7373b4" stroke-width=".7"/><rect x="427.98" y="146.95" width="9.400" height="9.400" fill="#0000ae" stroke="#7373b4" stroke-width=".7"/><rect x="414.10" y="155.97" width="9.400" height="9.400" fill="#0000ae" stroke="#7373b4" stroke-width=".7"/><rect x="401.23" y="166.39" width="9.400" height="9.400" fill="#0000ae" stroke="#7373b4" stroke-width=".7"/><rect x="389.53" y="178.09" width="9.400" height="9.400" fill="#0000ae" stroke="#7373b4" stroke-width=".7"/><rect x="379.11" y="190.96" width="9.400" height="9.400" fill="#0000ae" stroke="#7373b4" stroke-width=".7"/><rect x="370.09" y="204.84" width="9.400" height="9.400" fill="#0000ae" stroke="#7373b4" stroke-width=".7"/><rect x="362.58" y="219.59" width="9.400" height="9.400" fill="#0000ae" stroke="#7373b4" stroke-width=".7"/><rect x="356.65" y="235.05" width="9.400" height="9.400" fill="#0000ae" stroke="#7373b4" stroke-width=".7"/><rect x="352.36" y="251.04" width="9.400" height="9.400" fill="#0000ae" stroke="#7373b4" stroke-width=".7"/><rect x="349.77" y="267.39" width="9.400" height="9.400" fill="#0000ae" stroke="#7373b4" stroke-width=".7"/><rect x="348.90" y="283.92" width="9.400" height="9.400" fill="#0000ae" stroke="#7373b4" stroke-width=".7"/><rect x="349.77" y="300.45" width="9.400" height="9.400" fill="#0000ae" stroke="#7373b4" stroke-width=".7"/><rect x="352.36" y="316.80" width="9.400" height="9.400" fill="#0000ae" stroke="#7373b4" stroke-width=".7"/><rect x="356.65" y="332.79" width="9.400" height="9.400" fill="#0000ae" stroke="#7373b4" stroke-width=".7"/><rect x="362.58" y="348.25" width="9.400" height="9.400" fill="#0000ae" stroke="#7373b4" stroke-width=".7"/><rect x="370.09" y="363.00" width="9.400" height="9.400" fill="#0000ae" stroke="#7373b4" stroke-width=".7"/><rect x="379.11" y="376.88" width="9.400" height="9.400" fill="#0000ae" stroke="#7373b4" stroke-width=".7"/><rect x="389.53" y="389.75" width="9.400" height="9.400" fill="#0000ae" stroke="#7373b4" stroke-width=".7"/><rect x="401.23" y="401.45" width="9.400" height="9.400" fill="#0000ae" stroke="#7373b4" stroke-width=".7"/><rect x="414.10" y="411.87" width="9.400" height="9.400" fill="#0000ae" stroke="#7373b4" stroke-width=".7"/><rect x="427.98" y="420.89" width="9.400" height="9.400" fill="#0000ae" stroke="#7373b4" stroke-width=".7"/><rect x="442.73" y="428.40" width="9.400" height="9.400" fill="#0000ae" stroke="#7373b4" stroke-width=".7"/><rect x="458.19" y="434.33" width="9.400" height="9.400" fill="#0000ae" stroke="#7373b4" stroke-width=".7"/><rect x="474.18" y="438.62" width="9.400" height="9.400" fill="#0000ae" stroke="#7373b4" stroke-width=".7"/><rect x="490.53" y="441.21" width="9.400" height="9.400" fill="#0000ae" stroke="#7373b4" stroke-width=".7"/><rect x="507.06" y="442.08" width="9.400" height="9.400" fill="#0000ae" stroke="#7373b4" stroke-width=".7"/><rect x="523.59" y="441.21" width="9.400" height="9.400" fill="#0000ae" stroke="#7373b4" stroke-width=".7"/><rect x="539.94" y="438.62" width="9.400" height="9.400" fill="#0000ae" stroke="#7373b4" stroke-width=".7"/><rect x="555.93" y="434.33" width="9.400" height="9.400" fill="#0000ae" stroke="#7373b4" stroke-width=".7"/><rect x="571.39" y="428.40" width="9.400" height="9.400" fill="#0000ae" stroke="#7373b4" stroke-width=".7"/><rect x="586.14" y="420.89" width="9.400" height="9.400" fill="#0000ae" stroke="#7373b4" stroke-width=".7"/><rect x="600.02" y="411.87" width="9.400" height="9.400" fill="#0000ae" stroke="#7373b4" stroke-width=".7"/><rect x="612.89" y="401.45" width="9.400" height="9.400" fill="#0000ae" stroke="#7373b4" stroke-width=".7"/><rect x="624.59" y="389.75" width="9.400" height="9.400" fill="#0000ae" stroke="#7373b4" stroke-width=".7"/><rect x="635.01" y="376.88" width="9.400" height="9.400" fill="#0000ae" stroke="#7373b4" stroke-width=".7"/><rect x="644.03" y="363.00" width="9.400" height="9.400" fill="#0000ae" stroke="#7373b4" stroke-width=".7"/><rect x="651.54" y="348.25" width="9.400" height="9.400" fill="#0000ae" stroke="#7373b4" stroke-width=".7"/><rect x="657.47" y="332.79" width="9.400" height="9.400" fill="#0000ae" stroke="#7373b4" stroke-width=".7"/><rect x="661.76" y="316.80" width="9.400" height="9.400" fill="#0000ae" stroke="#7373b4" stroke-width=".7"/><rect x="664.35" y="300.45" width="9.400" height="9.400" fill="#0000ae" stroke="#7373b4" stroke-width=".7"/><rect x="507.06" y="351.70" width="9.400" height="9.400" fill="#0000ae" stroke="#7373b4" stroke-width=".7"/><rect x="514.15" y="351.33" width="9.400" height="9.400" fill="#0000ae" stroke="#7373b4" stroke-width=".7"/><rect x="521.15" y="350.22" width="9.400" height="9.400" fill="#0000ae" stroke="#7373b4" stroke-width=".7"/><rect x="528.01" y="348.38" width="9.400" height="9.400" fill="#0000ae" stroke="#7373b4" stroke-width=".7"/><rect x="534.63" y="345.84" width="9.400" height="9.400" fill="#0000ae" stroke="#7373b4" stroke-width=".7"/><rect x="540.95" y="342.62" width="9.400" height="9.400" fill="#0000ae" stroke="#7373b4" stroke-width=".7"/><rect x="546.90" y="338.76" width="9.400" height="9.400" fill="#0000ae" stroke="#7373b4" stroke-width=".7"/><rect x="552.41" y="334.29" width="9.400" height="9.400" fill="#0000ae" stroke="#7373b4" stroke-width=".7"/><rect x="557.43" y="329.27" width="9.400" height="9.400" fill="#0000ae" stroke="#7373b4" stroke-width=".7"/><rect x="561.90" y="323.76" width="9.400" height="9.400" fill="#0000ae" stroke="#7373b4" stroke-width=".7"/><rect x="565.76" y="317.81" width="9.400" height="9.400" fill="#0000ae" stroke="#7373b4" stroke-width=".7"/><rect x="568.98" y="311.49" width="9.400" height="9.400" fill="#0000ae" stroke="#7373b4" stroke-width=".7"/><rect x="571.52" y="304.87" width="9.400" height="9.400" fill="#0000ae" stroke="#7373b4" stroke-width=".7"/><rect x="573.36" y="298.01" width="9.400" height="9.400" fill="#0000ae" stroke="#7373b4" stroke-width=".7"/><rect x="574.47" y="291.01" width="9.400" height="9.400" fill="#0000ae" stroke="#7373b4" stroke-width=".7"/><rect x="574.84" y="283.92" width="9.400" height="9.400" fill="#0000ae" stroke="#7373b4" stroke-width=".7"/><rect x="574.47" y="276.83" width="9.400" height="9.400" fill="#0000ae" stroke="#7373b4" stroke-width=".7"/><rect x="573.36" y="269.83" width="9.400" height="9.400" fill="#0000ae" stroke="#7373b4" stroke-width=".7"/><rect x="571.52" y="262.97" width="9.400" height="9.400" fill="#0000ae" stroke="#7373b4" stroke-width=".7"/><rect x="568.98" y="256.35" width="9.400" height="9.400" fill="#0000ae" stroke="#7373b4" stroke-width=".7"/><rect x="565.76" y="250.03" width="9.400" height="9.400" fill="#0000ae" stroke="#7373b4" stroke-width=".7"/><rect x="561.90" y="244.08" width="9.400" height="9.400" fill="#0000ae" stroke="#7373b4" stroke-width=".7"/><rect x="557.43" y="238.57" width="9.400" height="9.400" fill="#0000ae" stroke="#7373b4" stroke-width=".7"/><rect x="552.41" y="233.55" width="9.400" height="9.400" fill="#0000ae" stroke="#7373b4" stroke-width=".7"/><rect x="546.90" y="229.08" width="9.400" height="9.400" fill="#0000ae" stroke="#7373b4" stroke-width=".7"/><rect x="540.95" y="225.22" width="9.400" height="9.400" fill="#0000ae" stroke="#7373b4" stroke-width=".7"/><rect x="534.63" y="222.00" width="9.400" height="9.400" fill="#0000ae" stroke="#7373b4" stroke-width=".7"/><rect x="528.01" y="219.46" width="9.400" height="9.400" fill="#0000ae" stroke="#7373b4" stroke-width=".7"/><rect x="521.15" y="217.62" width="9.400" height="9.400" fill="#0000ae" stroke="#7373b4" stroke-width=".7"/><rect x="514.15" y="216.51" width="9.400" height="9.400" fill="#0000ae" stroke="#7373b4" stroke-width=".7"/><rect x="507.06" y="216.14" width="9.400" height="9.400" fill="#0000ae" stroke="#7373b4" stroke-width=".7"/><rect x="499.97" y="216.51" width="9.400" height="9.400" fill="#0000ae" stroke="#7373b4" stroke-width=".7"/><rect x="492.97" y="217.62" width="9.400" height="9.400" fill="#0000ae" stroke="#7373b4" stroke-width=".7"/><rect x="486.11" y="219.46" width="9.400" height="9.400" fill="#0000ae" stroke="#7373b4" stroke-width=".7"/><rect x="479.49" y="222.00" width="9.400" height="9.400" fill="#0000ae" stroke="#7373b4" stroke-width=".7"/><rect x="473.17" y="225.22" width="9.400" height="9.400" fill="#0000ae" stroke="#7373b4" stroke-width=".7"/><rect x="467.22" y="229.08" width="9.400" height="9.400" fill="#0000ae" stroke="#7373b4" stroke-width=".7"/><rect x="461.71" y="233.55" width="9.400" height="9.400" fill="#0000ae" stroke="#7373b4" stroke-width=".7"/><rect x="456.69" y="238.57" width="9.400" height="9.400" fill="#0000ae" stroke="#7373b4" stroke-width=".7"/><rect x="452.22" y="244.08" width="9.400" height="9.400" fill="#0000ae" stroke="#7373b4" stroke-width=".7"/><rect x="448.36" y="250.03" width="9.400" height="9.400" fill="#0000ae" stroke="#7373b4" stroke-width=".7"/><rect x="445.14" y="256.35" width="9.400" height="9.400" fill="#0000ae" stroke="#7373b4" stroke-width=".7"/><rect x="442.60" y="262.97" width="9.400" height="9.400" fill="#0000ae" stroke="#7373b4" stroke-width=".7"/><rect x="440.76" y="269.83" width="9.400" height="9.400" fill="#0000ae" stroke="#7373b4" stroke-width=".7"/><rect x="439.65" y="276.83" width="9.400" height="9.400" fill="#0000ae" stroke="#7373b4" stroke-width=".7"/><rect x="439.28" y="283.92" width="9.400" height="9.400" fill="#0000ae" stroke="#7373b4" stroke-width=".7"/><rect x="439.65" y="291.01" width="9.400" height="9.400" fill="#0000ae" stroke="#7373b4" stroke-width=".7"/><rect x="440.76" y="298.01" width="9.400" height="9.400" fill="#0000ae" stroke="#7373b4" stroke-width=".7"/><rect x="442.60" y="304.87" width="9.400" height="9.400" fill="#0000ae" stroke="#7373b4" stroke-width=".7"/><rect x="445.14" y="311.49" width="9.400" height="9.400" fill="#0000ae" stroke="#7373b4" stroke-width=".7"/><rect x="448.36" y="317.81" width="9.400" height="9.400" fill="#0000ae" stroke="#7373b4" stroke-width=".7"/><rect x="452.22" y="323.76" width="9.400" height="9.400" fill="#0000ae" stroke="#7373b4" stroke-width=".7"/><rect x="456.69" y="329.27" width="9.400" height="9.400" fill="#0000ae" stroke="#7373b4" stroke-width=".7"/><rect x="461.71" y="334.29" width="9.400" height="9.400" fill="#0000ae" stroke="#7373b4" stroke-width=".7"/><rect x="467.22" y="338.76" width="9.400" height="9.400" fill="#0000ae" stroke="#7373b4" stroke-width=".7"/><rect x="473.17" y="342.62" width="9.400" height="9.400" fill="#0000ae" stroke="#7373b4" stroke-width=".7"/><rect x="479.49" y="345.84" width="9.400" height="9.400" fill="#0000ae" stroke="#7373b4" stroke-width=".7"/><rect x="486.11" y="348.38" width="9.400" height="9.400" fill="#0000ae" stroke="#7373b4" stroke-width=".7"/><rect x="492.97" y="350.22" width="9.400" height="9.400" fill="#0000ae" stroke="#7373b4" stroke-width=".7"/><rect x="499.97" y="351.33" width="9.400" height="9.400" fill="#0000ae" stroke="#7373b4" stroke-width=".7"/><rect x="650.15" y="283.92" width="9.400" height="9.400" fill="#0000ae" stroke="#7373b4" stroke-width=".7"/><rect x="668.98" y="283.92" width="9.400" height="9.400" fill="#0000ae" stroke="#7373b4" stroke-width=".7"/><rect x="659.57" y="287.69" width="9.400" height="9.400" fill="#0000ae" stroke="#7373b4" stroke-width=".7"/><rect x="659.57" y="280.15" width="9.400" height="9.400" fill="#0000ae" stroke="#7373b4" stroke-width=".7"/><rect x="629.44" y="283.92" width="9.400" height="9.400" fill="#0000ae" stroke="#7373b4" stroke-width=".7"/><rect x="630.98" y="212.37" width="9.400" height="9.400" fill="#0000ae" stroke="#7373b4" stroke-width=".7"/><rect x="647.29" y="202.96" width="9.400" height="9.400" fill="#0000ae" stroke="#7373b4" stroke-width=".7"/><rect x="641.02" y="210.93" width="9.400" height="9.400" fill="#0000ae" stroke="#7373b4" stroke-width=".7"/><rect x="637.25" y="204.41" width="9.400" height="9.400" fill="#0000ae" stroke="#7373b4" stroke-width=".7"/><rect x="613.05" y="222.73" width="9.400" height="9.400" fill="#0000ae" stroke="#7373b4" stroke-width=".7"/><rect x="578.61" y="160.00" width="9.400" height="9.400" fill="#0000ae" stroke="#7373b4" stroke-width=".7"/><rect x="588.02" y="143.69" width="9.400" height="9.400" fill="#0000ae" stroke="#7373b4" stroke-width=".7"/><rect x="586.57" y="153.73" width="9.400" height="9.400" fill="#0000ae" stroke="#7373b4" stroke-width=".7"/><rect x="580.05" y="149.96" width="9.400" height="9.400" fill="#0000ae" stroke="#7373b4" stroke-width=".7"/><rect x="568.25" y="177.93" width="9.400" height="9.400" fill="#0000ae" stroke="#7373b4" stroke-width=".7"/><rect x="507.06" y="140.83" width="9.400" height="9.400" fill="#0000ae" stroke="#7373b4" stroke-width=".7"/><rect x="507.06" y="122.00" width="9.400" height="9.400" fill="#0000ae" stroke="#7373b4" stroke-width=".7"/><rect x="510.83" y="131.41" width="9.400" height="9.400" fill="#0000ae" stroke="#7373b4" stroke-width=".7"/><rect x="503.29" y="131.41" width="9.400" height="9.400" fill="#0000ae" stroke="#7373b4" stroke-width=".7"/><rect x="507.06" y="161.54" width="9.400" height="9.400" fill="#0000ae" stroke="#7373b4" stroke-width=".7"/><rect x="435.51" y="160.00" width="9.400" height="9.400" fill="#0000ae" stroke="#7373b4" stroke-width=".7"/><rect x="426.10" y="143.69" width="9.400" height="9.400" fill="#0000ae" stroke="#7373b4" stroke-width=".7"/><rect x="434.07" y="149.96" width="9.400" height="9.400" fill="#0000ae" stroke="#7373b4" stroke-width=".7"/><rect x="427.55" y="153.73" width="9.400" height="9.400" fill="#0000ae" stroke="#7373b4" stroke-width=".7"/><rect x="445.87" y="177.93" width="9.400" height="9.400" fill="#0000ae" stroke="#7373b4" stroke-width=".7"/><rect x="383.14" y="212.37" width="9.400" height="9.400" fill="#0000ae" stroke="#7373b4" stroke-width=".7"/><rect x="366.83" y="202.96" width="9.400" height="9.400" fill="#0000ae" stroke="#7373b4" stroke-width=".7"/><rect x="376.87" y="204.41" width="9.400" height="9.400" fill="#0000ae" stroke="#7373b4" stroke-width=".7"/><rect x="373.10" y="210.93" width="9.400" height="9.400" fill="#0000ae" stroke="#7373b4" stroke-width=".7"/><rect x="401.07" y="222.73" width="9.400" height="9.400" fill="#0000ae" stroke="#7373b4" stroke-width=".7"/><rect x="363.97" y="283.92" width="9.400" height="9.400" fill="#0000ae" stroke="#7373b4" stroke-width=".7"/><rect x="345.14" y="283.92" width="9.400" height="9.400" fill="#0000ae" stroke="#7373b4" stroke-width=".7"/><rect x="354.55" y="280.15" width="9.400" height="9.400" fill="#0000ae" stroke="#7373b4" stroke-width=".7"/><rect x="354.55" y="287.69" width="9.400" height="9.400" fill="#0000ae" stroke="#7373b4" stroke-width=".7"/><rect x="384.68" y="283.92" width="9.400" height="9.400" fill="#0000ae" stroke="#7373b4" stroke-width=".7"/><rect x="383.14" y="355.47" width="9.400" height="9.400" fill="#0000ae" stroke="#7373b4" stroke-width=".7"/><rect x="366.83" y="364.88" width="9.400" height="9.400" fill="#0000ae" stroke="#7373b4" stroke-width=".7"/><rect x="373.10" y="356.91" width="9.400" height="9.400" fill="#0000ae" stroke="#7373b4" stroke-width=".7"/><rect x="376.87" y="363.43" width="9.400" height="9.400" fill="#0000ae" stroke="#7373b4" stroke-width=".7"/><rect x="401.07" y="345.11" width="9.400" height="9.400" fill="#0000ae" stroke="#7373b4" stroke-width=".7"/><rect x="435.51" y="407.84" width="9.400" height="9.400" fill="#0000ae" stroke="#7373b4" stroke-width=".7"/><rect x="426.10" y="424.15" width="9.400" height="9.400" fill="#0000ae" stroke="#7373b4" stroke-width=".7"/><rect x="427.55" y="414.11" width="9.400" height="9.400" fill="#0000ae" stroke="#7373b4" stroke-width=".7"/><rect x="434.07" y="417.88" width="9.400" height="9.400" fill="#0000ae" stroke="#7373b4" stroke-width=".7"/><rect x="445.87" y="389.91" width="9.400" height="9.400" fill="#0000ae" stroke="#7373b4" stroke-width=".7"/><rect x="507.06" y="427.01" width="9.400" height="9.400" fill="#0000ae" stroke="#7373b4" stroke-width=".7"/><rect x="507.06" y="445.84" width="9.400" height="9.400" fill="#0000ae" stroke="#7373b4" stroke-width=".7"/><rect x="503.29" y="436.43" width="9.400" height="9.400" fill="#0000ae" stroke="#7373b4" stroke-width=".7"/><rect x="510.83" y="436.43" width="9.400" height="9.400" fill="#0000ae" stroke="#7373b4" stroke-width=".7"/><rect x="507.06" y="406.30" width="9.400" height="9.400" fill="#0000ae" stroke="#7373b4" stroke-width=".7"/><rect x="578.61" y="407.84" width="9.400" height="9.400" fill="#0000ae" stroke="#7373b4" stroke-width=".7"/><rect x="588.02" y="424.15" width="9.400" height="9.400" fill="#0000ae" stroke="#7373b4" stroke-width=".7"/><rect x="580.05" y="417.88" width="9.400" height="9.400" fill="#0000ae" stroke="#7373b4" stroke-width=".7"/><rect x="586.57" y="414.11" width="9.400" height="9.400" fill="#0000ae" stroke="#7373b4" stroke-width=".7"/><rect x="568.25" y="389.91" width="9.400" height="9.400" fill="#0000ae" stroke="#7373b4" stroke-width=".7"/><rect x="630.98" y="355.47" width="9.400" height="9.400" fill="#0000ae" stroke="#7373b4" stroke-width=".7"/><rect x="647.29" y="364.88" width="9.400" height="9.400" fill="#0000ae" stroke="#7373b4" stroke-width=".7"/><rect x="637.25" y="363.43" width="9.400" height="9.400" fill="#0000ae" stroke="#7373b4" stroke-width=".7"/><rect x="641.02" y="356.91" width="9.400" height="9.400" fill="#0000ae" stroke="#7373b4" stroke-width=".7"/><rect x="613.05" y="345.11" width="9.400" height="9.400" fill="#0000ae" stroke="#7373b4" stroke-width=".7"/></svg><div style="left:1118px;top:155px;width:16px;height:577.5px;background:linear-gradient(90deg,#f2f2f2,#fafafa 40%,#fcfcfc)"></div><div style="left:1123px;top:303.3px;width:8px;height:279.4px;background:#000;border-radius:4px"></div><div style="left:95px;top:732px;width:1039px;height:16.6px;background:linear-gradient(#fdfdfd,#f7f7f7)"></div><div style="left:161.3px;top:737.2px;width:835.7px;height:7.8px;background:#7e7e7e;border-radius:4px"></div><div style="left:1063px;top:732.6px;width:71px;height:16px;background:#ececec"></div><span class="t" style="left:1082.81px;top:733.00px;font-size:13px;line-height:15px;color:#000;letter-spacing:-0.111px;">10 &lt; 100</span><div style="left:1134px;top:108px;width:10px;height:690.6px;background:#efefef"></div><div style="left:1144px;top:108px;width:11px;height:690.6px;background:#e6e6e6"></div><div style="left:72.5px;top:748.6px;width:1061.5px;height:22px;background:#fff;border-top:1px solid #b2b2b2;border-bottom:1px solid #c0c0c0"></div><span class="t" style="left:77.20px;top:750.30px;font-size:13px;line-height:15px;color:#0000d2;font-style:italic;letter-spacing:-0.085px;">Kommando:</span><span class="t" style="left:151.55px;top:750.30px;font-size:13px;line-height:15px;color:#0000d2;letter-spacing:0.185px;">addlayer</span><div style="left:71.5px;top:770.6px;width:1062.5px;height:28px;background:#ececec"></div><span class="t" style="left:72.79px;top:777.60px;font-size:13.5px;line-height:15px;color:#000;letter-spacing:-0.120px;">Kommando:</span><div style="left:148px;top:776px;width:959px;height:18px;background:#fff"></div><div style="left:1107.3px;top:772.4px;width:25.4px;height:25.2px;border:1px solid #ababab;background:linear-gradient(#f7f7f7,#ebebeb)"></div><div style="left:1113px;top:780px;width:14px;height:10px;border:1px solid #111;border-top:3.2px solid #000;background:#f4f4f4"></div>
<footer id="status" style="left:0;top:798.6px;width:1500px;height:45.4px;background:#dcdcdc"></footer><span class="t" style="left:2.14px;top:806.70px;font-size:9.5px;line-height:11px;color:#1f1f1f;letter-spacing:0.418px;-webkit-text-stroke:.2px currentColor">332.9168,138.5096</span><span class="t" style="left:1.75px;top:827.00px;font-size:9.5px;line-height:11px;color:#1f1f1f;letter-spacing:0.349px;-webkit-text-stroke:.2px currentColor">@332.9168,138.5096</span><div style="left:253.6px;top:802.4px;width:1px;height:39.2px;background:#8a8a8a"></div><span class="t" style="left:256.44px;top:806.70px;font-size:9.5px;line-height:11px;color:#1f1f1f;letter-spacing:0.636px;-webkit-text-stroke:.2px currentColor">360.5808&lt;23°</span><span class="t" style="left:256.05px;top:827.00px;font-size:9.5px;line-height:11px;color:#1f1f1f;letter-spacing:0.519px;-webkit-text-stroke:.2px currentColor">@360.5808&lt;23°</span><span class="t" style="left:549.32px;top:811.00px;font-size:9.5px;line-height:11px;color:#1f1f1f;letter-spacing:0.337px;-webkit-text-stroke:.2px currentColor">Element oder Bereich selektieren</span><span class="t" style="left:512.72px;top:822.00px;font-size:9.5px;line-height:11px;color:#1f1f1f;letter-spacing:0.330px;-webkit-text-stroke:.2px currentColor">Element oder Referenzpunkt verschieben</span><span class="t" style="left:948.87px;top:810.90px;font-size:9.5px;line-height:11px;color:#1f1f1f;letter-spacing:0.410px;-webkit-text-stroke:.2px currentColor">Selektierte Objekte:</span><span class="t" style="left:948.58px;top:822.30px;font-size:9.5px;line-height:11px;color:#1f1f1f;letter-spacing:0.412px;-webkit-text-stroke:.2px currentColor">149 Objekte auf Layer "0".</span><div style="left:506.8px;top:819.4px;width:5.2px;height:5.2px;background:#cdcdcd;border-radius:50%"></div><div style="left:940.6px;top:819.4px;width:5.2px;height:5.2px;background:#cdcdcd;border-radius:50%"></div><div style="left:1269.9px;top:819.4px;width:5.2px;height:5.2px;background:#cdcdcd;border-radius:50%"></div><svg class="ic" style="left:717px;top:805px;" width="20" height="32" viewBox="0 0 20 32"><path d="M1.600 10.400q0-9.200 8-9.200t8 9.200v10.600q0 9.200-8 9.200t-8-9.200z" fill="#fff" stroke="#333" stroke-width="1"/><path d="M1.600 13.600q8-2 16 0" fill="none" stroke="#333" stroke-width="1"/><rect x="8.500" y="3.400" width="2.600" height="6.400" rx="1.300" fill="#fff" stroke="#333" stroke-width=".9"/><path d="M9.800 9.800v3" stroke="#333" stroke-width=".9"/></svg>
<section id="dock" style="left:1155px;top:108px;width:300px;height:690.6px;background:#ececec;border-left:1px solid #cacaca;border-right:1px solid #cfcfcf"></section><div style="left:1155px;top:108px;width:300px;height:23px;background:linear-gradient(#ececec,#e9e9e9 40%,#e0e0e0 84%,#c6c6c6 92%,#bebebe 100%)"></div><svg class="ic" style="left:1157px;top:111px;" width="32" height="14" viewBox="0 0 32 14"><circle cx="7" cy="6.900" r="6.900" fill="#606060"/><path d="M3.900 3.800l6.200 6.200M10.100 3.800l-6.200 6.200" stroke="#fff" stroke-width="1.900"/><circle cx="25" cy="6.900" r="6.900" fill="#606060"/><rect x="23.500" y="4.500" width="5.300" height="3.900" rx=".9" fill="none" stroke="#fff" stroke-width="1.200"/><rect x="21.300" y="6.500" width="5.500" height="3.900" rx=".9" fill="#606060" stroke="#fff" stroke-width="1.200"/></svg><span class="t" style="left:1269.12px;top:112.30px;font-size:12px;line-height:14px;color:#262626;letter-spacing:-0.027px;-webkit-text-stroke:.3px currentColor">Eigenschafteneditor</span><span class="t" style="left:1169.18px;top:146.70px;font-size:13px;line-height:15px;color:#000;letter-spacing:0.050px;">Auswahl:</span><div class="combo" style="left:1231px;top:144px;width:209px;height:20px;"></div><div class="pop" style="left:1423px;top:146px;width:16px;height:16px;"><svg class="ic" style="left:0;top:0" width="16" height="16" viewBox="0 0 16 16"><path d="M5.200 6.900 8.200 3.800l3 3.100M5.200 9.500l3 3.100 3-3.100" fill="none" stroke="#fff" stroke-width="1.300" stroke-linecap="round" stroke-linejoin="round"/></svg></div><span class="t" style="left:1234.91px;top:146.70px;font-size:13px;line-height:15px;color:#000;letter-spacing:0.084px;">Text [12]</span><div class="grp" style="left:1168.3px;top:183.4px;width:273px;height:185px;"></div><span class="t" style="left:1175.78px;top:169.70px;font-size:12px;line-height:14px;color:#111;letter-spacing:-0.116px;">Allgemeine Eigenschaften</span><span class="t" style="left:1260.13px;top:198.70px;font-size:13px;line-height:15px;color:#000;letter-spacing:0.143px;">Layer:</span><div class="combo" style="left:1300px;top:196px;width:104px;height:20px;"></div><div class="pop" style="left:1386px;top:198px;width:16px;height:16px;"><svg class="ic" style="left:0;top:0" width="16" height="16" viewBox="0 0 16 16"><path d="M5.200 6.900 8.200 3.800l3 3.100M5.200 9.500l3 3.100 3-3.100" fill="none" stroke="#fff" stroke-width="1.300" stroke-linecap="round" stroke-linejoin="round"/></svg></div><svg class="ic" style="left:1300px;top:196px;" width="24" height="20" viewBox="0 0 24 20"><rect x="3.300" y="5.200" width="15" height="9" fill="#fff" stroke="#000" stroke-width="1.200"/></svg><span class="t" style="left:1325.59px;top:198.70px;font-size:13px;line-height:15px;color:#000;">0</span><div style="left:1407.3px;top:193.3px;width:25.4px;height:25.4px;border:1px solid #ababab;background:linear-gradient(#f6f6f6,#ececec)"></div><svg class="ic" style="left:1407.3px;top:193.3px;" width="26" height="26" viewBox="0 0 26 26"><path d="M6 8.200h13M6 12.900h13M6 17.600h13" stroke="#7e7e7e" stroke-width="1.800" stroke-linecap="round"/></svg><span class="t" style="left:1259.13px;top:224.70px;font-size:13px;line-height:15px;color:#000;letter-spacing:0.054px;">Farbe:</span><div class="combo" style="left:1300px;top:222px;width:131px;height:20px;"></div><div class="pop" style="left:1414px;top:224px;width:16px;height:16px;"><svg class="ic" style="left:0;top:0" width="16" height="16" viewBox="0 0 16 16"><path d="M5.200 6.900 8.200 3.800l3 3.100M5.200 9.500l3 3.100 3-3.100" fill="none" stroke="#fff" stroke-width="1.300" stroke-linecap="round" stroke-linejoin="round"/></svg></div><svg class="ic" style="left:1300px;top:222px;" width="24" height="20" viewBox="0 0 24 20"><rect x="3.300" y="5.200" width="15" height="9" fill="#fff" stroke="#000" stroke-width="1.200"/></svg><span class="t" style="left:1325.75px;top:224.70px;font-size:13px;line-height:15px;color:#000;letter-spacing:-0.072px;">Von Layer</span><span class="t" style="left:1223.13px;top:248.70px;font-size:13px;line-height:15px;color:#000;letter-spacing:0.252px;">Linienbreite:</span><div class="combo" style="left:1300px;top:246px;width:131px;height:20px;"></div><div class="pop" style="left:1414px;top:248px;width:16px;height:16px;"><svg class="ic" style="left:0;top:0" width="16" height="16" viewBox="0 0 16 16"><path d="M5.200 6.900 8.200 3.800l3 3.100M5.200 9.500l3 3.100 3-3.100" fill="none" stroke="#fff" stroke-width="1.300" stroke-linecap="round" stroke-linejoin="round"/></svg></div><svg class="ic" style="left:1300px;top:246px;" width="24" height="20" viewBox="0 0 24 20"><path d="M2.800 9.800h16" stroke="#222" stroke-width="1"/></svg><span class="t" style="left:1325.75px;top:248.70px;font-size:13px;line-height:15px;color:#000;letter-spacing:-0.072px;">Von Layer</span><span class="t" style="left:1238.13px;top:272.70px;font-size:13px;line-height:15px;color:#000;letter-spacing:0.355px;">Linientyp:</span><div class="combo" style="left:1300px;top:270px;width:131px;height:20px;"></div><div class="pop" style="left:1414px;top:272px;width:16px;height:16px;"><svg class="ic" style="left:0;top:0" width="16" height="16" viewBox="0 0 16 16"><path d="M5.200 6.900 8.200 3.800l3 3.100M5.200 9.500l3 3.100 3-3.100" fill="none" stroke="#fff" stroke-width="1.300" stroke-linecap="round" stroke-linejoin="round"/></svg></div><span class="t" style="left:1303.75px;top:270.90px;font-size:13px;line-height:15px;color:#000;letter-spacing:-0.122px;">Von Layer</span><span class="t" style="left:1176.73px;top:296.70px;font-size:13px;line-height:15px;color:#000;letter-spacing:0.281px;">Linientypskalierung:</span><div class="inp" style="left:1300px;top:294px;width:132px;height:19px;"></div><span class="t" style="left:1301.11px;top:296.70px;font-size:13px;line-height:15px;color:#000;">1</span><span class="t" style="left:1222.73px;top:319.70px;font-size:13px;line-height:15px;color:#000;letter-spacing:0.113px;">Reihenfolge:</span><div class="inp" style="left:1300px;top:317px;width:132px;height:19px;"></div><span class="t" style="left:1301.59px;top:319.70px;font-size:13px;line-height:15px;color:#000;letter-spacing:-0.385px;">*VARIIERT*</span><span class="t" style="left:1251.13px;top:342.70px;font-size:13px;line-height:15px;color:#000;letter-spacing:0.173px;">Handle:</span><div class="inp" style="left:1300px;top:340px;width:132px;height:19px;"></div><span class="t" style="left:1301.59px;top:342.70px;font-size:13px;line-height:15px;color:#c3c3c3;letter-spacing:-0.385px;">*VARIIERT*</span><div class="grp" style="left:1168.3px;top:387.3px;width:273px;height:403px;"></div><span class="t" style="left:1175.26px;top:373.00px;font-size:12px;line-height:14px;color:#111;letter-spacing:-0.060px;">Spezifische Eigenschaften</span><span class="t" style="left:1217.03px;top:400.70px;font-size:13px;line-height:15px;color:#000;letter-spacing:0.153px;">Einfach:</span><div class="combo" style="left:1268px;top:398px;width:163px;height:20px;"></div><div class="pop" style="left:1414px;top:400px;width:16px;height:16px;"><svg class="ic" style="left:0;top:0" width="16" height="16" viewBox="0 0 16 16"><path d="M5.200 6.900 8.200 3.800l3 3.100M5.200 9.500l3 3.100 3-3.100" fill="none" stroke="#fff" stroke-width="1.300" stroke-linecap="round" stroke-linejoin="round"/></svg></div><span class="t" style="left:1270.73px;top:400.70px;font-size:13px;line-height:15px;color:#000;letter-spacing:0.290px;">Nein</span><span class="t" style="left:1237.21px;top:423.30px;font-size:13px;line-height:15px;color:#000;letter-spacing:0.103px;">Text:</span><div class="inp" style="left:1268px;top:422px;width:164px;height:19px;"></div><span class="t" style="left:1269.89px;top:424.40px;font-size:13px;line-height:15px;color:#000;letter-spacing:-0.418px;">*VARIIERT*</span><span class="t" style="left:1214.73px;top:446.40px;font-size:13px;line-height:15px;color:#000;letter-spacing:0.333px;">Klartext:</span><div class="inp" style="left:1268px;top:445px;width:164px;height:19px;"></div><span class="t" style="left:1269.89px;top:447.40px;font-size:13px;line-height:15px;color:#c3c3c3;letter-spacing:-0.418px;">*VARIIERT*</span><span class="t" style="left:1205.21px;top:470.70px;font-size:13px;line-height:15px;color:#000;letter-spacing:0.424px;">Schriftart:</span><div class="combo" style="left:1268px;top:468px;width:163px;height:20px;"></div><div class="pop" style="left:1414px;top:470px;width:16px;height:16px;"><svg class="ic" style="left:0;top:0" width="16" height="16" viewBox="0 0 16 16"><path d="M5.200 6.900 8.200 3.800l3 3.100M5.200 9.500l3 3.100 3-3.100" fill="none" stroke="#fff" stroke-width="1.300" stroke-linecap="round" stroke-linejoin="round"/></svg></div><span class="t" style="left:1271.51px;top:470.70px;font-size:13px;line-height:15px;color:#000;letter-spacing:0.006px;">Times New Roman</span><span class="t" style="left:1207.51px;top:493.30px;font-size:13px;line-height:15px;color:#000;letter-spacing:0.149px;">Texthöhe:</span><div class="inp" style="left:1268px;top:492px;width:164px;height:19px;"></div><span class="t" style="left:1268.91px;top:494.70px;font-size:13px;line-height:15px;color:#000;letter-spacing:-0.450px;">12</span><span class="t" style="left:1203.21px;top:516.30px;font-size:13px;line-height:15px;color:#000;letter-spacing:0.189px;">Textbreite:</span><div class="inp" style="left:1268px;top:515px;width:164px;height:19px;"></div><span class="t" style="left:1269.59px;top:517.70px;font-size:13px;line-height:15px;color:#000;">0</span><span class="t" style="left:1199.91px;top:539.30px;font-size:13px;line-height:15px;color:#000;letter-spacing:0.159px;">Textwinkel:</span><div class="inp" style="left:1268px;top:538px;width:164px;height:19px;"></div><span class="t" style="left:1269.59px;top:540.70px;font-size:13px;line-height:15px;color:#000;">0</span><span class="t" style="left:1186.61px;top:562.70px;font-size:13px;line-height:15px;color:#000;letter-spacing:0.095px;">X Skalierung:</span><div class="inp" style="left:1268px;top:561px;width:164px;height:19px;"></div><span class="t" style="left:1269.31px;top:563.70px;font-size:13px;line-height:15px;color:#000;">1</span><span class="t" style="left:1237.83px;top:586.40px;font-size:13px;line-height:15px;color:#000;letter-spacing:0.311px;">Fett:</span><div class="combo" style="left:1268px;top:584px;width:163px;height:20px;"></div><div class="pop" style="left:1414px;top:586px;width:16px;height:16px;"><svg class="ic" style="left:0;top:0" width="16" height="16" viewBox="0 0 16 16"><path d="M5.200 6.900 8.200 3.800l3 3.100M5.200 9.500l3 3.100 3-3.100" fill="none" stroke="#fff" stroke-width="1.300" stroke-linecap="round" stroke-linejoin="round"/></svg></div><span class="t" style="left:1270.73px;top:586.40px;font-size:13px;line-height:15px;color:#000;letter-spacing:0.290px;">Nein</span><span class="t" style="left:1223.73px;top:610.40px;font-size:13px;line-height:15px;color:#000;letter-spacing:0.269px;">Kursiv:</span><div class="combo" style="left:1268px;top:608px;width:163px;height:20px;"></div><div class="pop" style="left:1414px;top:610px;width:16px;height:16px;"><svg class="ic" style="left:0;top:0" width="16" height="16" viewBox="0 0 16 16"><path d="M5.200 6.900 8.200 3.800l3 3.100M5.200 9.500l3 3.100 3-3.100" fill="none" stroke="#fff" stroke-width="1.300" stroke-linecap="round" stroke-linejoin="round"/></svg></div><span class="t" style="left:1270.73px;top:610.40px;font-size:13px;line-height:15px;color:#000;letter-spacing:0.290px;">Nein</span><span class="t" style="left:1177.03px;top:633.60px;font-size:13px;line-height:15px;color:#000;letter-spacing:0.268px;">Linienabstand:</span><div class="inp" style="left:1268px;top:632px;width:164px;height:19px;"></div><span class="t" style="left:1269.31px;top:634.70px;font-size:13px;line-height:15px;color:#000;">1</span><span class="t" style="left:1177.66px;top:654.70px;font-size:13px;line-height:15px;color:#000;font-weight:700;letter-spacing:0.024px;">Text Position</span><span class="t" style="left:1252.91px;top:674.70px;font-size:13px;line-height:15px;color:#000;letter-spacing:-0.116px;">X:</span><div class="inp" style="left:1268px;top:673px;width:164px;height:19px;"></div><span class="t" style="left:1269.89px;top:675.40px;font-size:13px;line-height:15px;color:#000;letter-spacing:-0.418px;">*VARIIERT*</span><span class="t" style="left:1253.11px;top:697.00px;font-size:13px;line-height:15px;color:#000;letter-spacing:0.399px;">Y:</span><div class="inp" style="left:1268px;top:696px;width:164px;height:19px;"></div><span class="t" style="left:1269.89px;top:698.40px;font-size:13px;line-height:15px;color:#000;letter-spacing:-0.418px;">*VARIIERT*</span><span class="t" style="left:1177.48px;top:718.70px;font-size:13px;line-height:15px;color:#000;font-weight:700;letter-spacing:0.163px;">Ausrichtung</span><span class="t" style="left:1200.13px;top:739.70px;font-size:13px;line-height:15px;color:#000;letter-spacing:0.281px;">Horizontal:</span><div class="combo" style="left:1268px;top:737px;width:163px;height:20px;"></div><div class="pop" style="left:1414px;top:739px;width:16px;height:16px;"><svg class="ic" style="left:0;top:0" width="16" height="16" viewBox="0 0 16 16"><path d="M5.200 6.900 8.200 3.800l3 3.100M5.200 9.500l3 3.100 3-3.100" fill="none" stroke="#fff" stroke-width="1.300" stroke-linecap="round" stroke-linejoin="round"/></svg></div><span class="t" style="left:1271.39px;top:739.70px;font-size:13px;line-height:15px;color:#000;letter-spacing:0.360px;">Zentrum</span><span class="t" style="left:1217.45px;top:763.30px;font-size:13px;line-height:15px;color:#000;letter-spacing:0.173px;">Vertikal:</span><div class="combo" style="left:1268px;top:761px;width:163px;height:20px;"></div><div class="pop" style="left:1414px;top:763px;width:16px;height:16px;"><svg class="ic" style="left:0;top:0" width="16" height="16" viewBox="0 0 16 16"><path d="M5.200 6.900 8.200 3.800l3 3.100M5.200 9.500l3 3.100 3-3.100" fill="none" stroke="#fff" stroke-width="1.300" stroke-linecap="round" stroke-linejoin="round"/></svg></div><span class="t" style="left:1270.73px;top:763.30px;font-size:13px;line-height:15px;color:#000;letter-spacing:0.617px;">Mitte</span>
<div style="left:1135px;top:340px;width:20px;height:144px;background:linear-gradient(90deg,#2a8cff,#1a80fb);border-radius:5px 0 0 5px"></div><span class="t" style="left:1085.15px;top:403.81px;width:120.89px;height:16px;font-size:13px;line-height:16px;letter-spacing:0.315px;color:#fff;transform:rotate(-90deg);transform-origin:50% 50%">Eigenschafteneditor</span><div style="left:1135px;top:488.3px;width:20px;height:81.4px;background:#d2d2d2;border-radius:5px 0 0 5px"></div><span class="t" style="left:1116.33px;top:521.04px;width:58.53px;height:16px;font-size:13px;line-height:16px;letter-spacing:0.289px;color:#2a2a2a;transform:rotate(-90deg);transform-origin:50% 50%">Layerliste</span>
<aside id="rtools" style="left:1455px;top:108px;width:45px;height:690.6px;background:linear-gradient(90deg,#eaeaea 0,#e4e4e4 35%,#d2d2d2 75%,#c3c3c3 100%)"></aside><svg class="ic" style="left:0;top:0" width="1500" height="520" viewBox="0 0 1500 520"><rect x="1461.6" y="116" width="2" height="2" fill="#a6a6a6"/><rect x="1468.0" y="116" width="2" height="2" fill="#a6a6a6"/><rect x="1474.4" y="116" width="2" height="2" fill="#a6a6a6"/><rect x="1480.8" y="116" width="2" height="2" fill="#a6a6a6"/><rect x="1487.2" y="116" width="2" height="2" fill="#a6a6a6"/><line x1="1458" y1="261.6" x2="1500" y2="261.6" stroke="#555" stroke-width=".9" stroke-dasharray="1 2.050"/><line x1="1458" y1="410.7" x2="1500" y2="410.7" stroke="#555" stroke-width=".9" stroke-dasharray="1 2.050"/></svg><div class="sel" style="left:1456px;top:120px;width:44px;height:42.7px;border-radius:5px"></div><div class="sel" style="left:1456px;top:269.3px;width:44px;height:42.4px;border-radius:5px"></div><div class="sel" style="left:1456px;top:418px;width:44px;height:43px;border-radius:5px"></div><svg class="ic" style="left:1463px;top:127px;" width="28" height="28" viewBox="0 0 28 28"><rect x=".45" y=".45" width="27.100" height="27.100" fill="#fff" stroke="#1a1a1a" stroke-width=".9"/><rect x="0" y="0" width="28" height="4.500" fill="#000"/><rect x="1" y="1" width="3" height="3" fill="#fff"/></svg><svg class="ic" style="left:1463px;top:127px;" width="28" height="28" viewBox="0 0 28 28"><path d="M7.500 13.400l8.600-3v9.400l-8.600 3z" fill="#cfcfcf" stroke="#555" stroke-width=".7"/><path d="M10 12.400l8.600-3v9.400l-8.600 3z" fill="#e9e9e9" stroke="#555" stroke-width=".7"/><path d="M13.600 18.600l3.600-6.800 .4 5.400z" fill="none" stroke="#e33" stroke-width=".8"/></svg><svg class="ic" style="left:1463px;top:174px;" width="28" height="28" viewBox="0 0 28 28"><rect x=".45" y=".45" width="27.100" height="27.100" fill="#fff" stroke="#1a1a1a" stroke-width=".9"/><rect x="0" y="0" width="28" height="4.500" fill="#000"/><rect x="1" y="1" width="3" height="3" fill="#fff"/></svg><svg class="ic" style="left:1463px;top:174px;" width="28" height="28" viewBox="0 0 28 28"><rect x="7.200" y="10.200" width="10.600" height="7" fill="#fff3c4" stroke="#555" stroke-width=".8"/><circle cx="16.200" cy="17.200" r="4" fill="#fff3c4" stroke="#555" stroke-width=".8"/></svg><svg class="ic" style="left:1463px;top:220.4px;" width="28" height="28" viewBox="0 0 28 28"><rect x=".45" y=".45" width="27.100" height="27.100" fill="#fff" stroke="#1a1a1a" stroke-width=".9"/><rect x="0" y="0" width="28" height="4.500" fill="#000"/><rect x="1" y="1" width="3" height="3" fill="#fff"/></svg><svg class="ic" style="left:1463px;top:220.4px;" width="28" height="28" viewBox="0 0 28 28"><rect x="5.400" y="10.400" width="16.400" height="11" rx="2" fill="#f4f4f2" stroke="#c3cfe4" stroke-width=".9"/></svg><svg class="ic" style="left:1463px;top:276.4px;" width="28" height="28" viewBox="0 0 28 28"><rect x=".45" y=".45" width="27.100" height="27.100" fill="#fff" stroke="#1a1a1a" stroke-width=".9"/><rect x="0" y="0" width="28" height="4.500" fill="#000"/><rect x="1" y="1" width="3" height="3" fill="#fff"/></svg><svg class="ic" style="left:1463px;top:276.4px;" width="28" height="28" viewBox="0 0 28 28"><rect x="2.800" y="8.2" width="4.400" height="3.400" rx=".6" fill="#000"/><rect x="10.200" y="8.4" width="14" height="3" fill="#fff" stroke="#333" stroke-width=".7"/><rect x="2.800" y="14.1" width="4.400" height="3.400" rx=".6" fill="#000"/><rect x="10.200" y="14.3" width="14" height="3" fill="#fff" stroke="#333" stroke-width=".7"/><rect x="2.800" y="20.0" width="4.400" height="3.400" rx=".6" fill="#000"/><rect x="10.200" y="20.2" width="14" height="3" fill="#fff" stroke="#333" stroke-width=".7"/></svg><svg class="ic" style="left:1463px;top:323.3px;" width="28" height="28" viewBox="0 0 28 28"><rect x=".45" y=".45" width="27.100" height="27.100" fill="#fff" stroke="#1a1a1a" stroke-width=".9"/><rect x="0" y="0" width="28" height="4.500" fill="#000"/><rect x="1" y="1" width="3" height="3" fill="#fff"/></svg><svg class="ic" style="left:1463px;top:323.3px;" width="28" height="28" viewBox="0 0 28 28"><path d="M7 10.600q7.200 2.200 14.400 0l-5.600 6.600v6l-2.600-1.600v-4.400z" fill="#a4a4a4" stroke="#7a7a7a" stroke-width=".5"/><ellipse cx="14.200" cy="10.400" rx="7.200" ry="1.500" fill="#8c8c8c"/></svg><svg class="ic" style="left:1463px;top:369.3px;" width="28" height="28" viewBox="0 0 28 28"><rect x=".45" y=".45" width="27.100" height="27.100" fill="#fff" stroke="#1a1a1a" stroke-width=".9"/><rect x="0" y="0" width="28" height="4.500" fill="#000"/><rect x="1" y="1" width="3" height="3" fill="#fff"/></svg><svg class="ic" style="left:1463px;top:369.3px;" width="28" height="28" viewBox="0 0 28 28"><path d="M5.600 10.200v12l4.400-2.800v-6.400z" fill="#f6f6f6" stroke="#333" stroke-width=".8"/><rect x="10" y="13" width="11.200" height="6.400" rx="1.600" fill="#9c9c9c" stroke="#777" stroke-width=".5"/><path d="M12 13.200v6M14 13.200v6M16 13.200v6M18 13.200v6" stroke="#7c7c7c" stroke-width=".7"/><path d="M3.600 16.200h20" stroke="#f08a8a" stroke-width=".8" stroke-dasharray="2 1.200"/></svg><svg class="ic" style="left:1463px;top:425.3px;" width="28" height="28" viewBox="0 0 28 28"><rect x=".45" y=".45" width="27.100" height="27.100" fill="#fff" stroke="#1a1a1a" stroke-width=".9"/><rect x="0" y="0" width="28" height="4.500" fill="#000"/><rect x="1" y="1" width="3" height="3" fill="#fff"/></svg><svg class="ic" style="left:1463px;top:425.3px;" width="28" height="28" viewBox="0 0 28 28"><path d="M2.600 9h14M2.600 12.400h11M2.600 15.800h15.600M2.600 19.200h17" stroke="#8a8a8a" stroke-width="1.100" stroke-dasharray="5 .800 3 1"/><path d="M0 23.200h28" stroke="#000" stroke-width=".8"/><path d="M2.600 25.600h2M8 25.600h17.400" stroke="#444" stroke-width="1.200" stroke-dasharray="2.400 .600"/></svg><svg class="ic" style="left:1463px;top:472.3px;" width="28" height="28" viewBox="0 0 28 28"><rect x=".45" y=".45" width="27.100" height="27.100" fill="#fff" stroke="#1a1a1a" stroke-width=".9"/><rect x="0" y="0" width="28" height="4.500" fill="#000"/><rect x="1" y="1" width="3" height="3" fill="#fff"/></svg><svg class="ic" style="left:1463px;top:472.3px;" width="28" height="28" viewBox="0 0 28 28"><rect x="7.600" y="8.800" width="12.600" height="14" rx="1" fill="#c4882e" stroke="#93601a" stroke-width=".7"/><rect x="9.400" y="10.600" width="9" height="10.800" fill="#f4f4f4"/><path d="M10.600 13h6.600M10.600 15h6.600M10.600 17h6.600M10.600 19h4" stroke="#c9c9c9" stroke-width=".7"/><path d="M16.400 21.400v-2.600h2z" fill="#9a9a9a"/><rect x="11" y="7.400" width="5.800" height="2.800" rx=".8" fill="#8f8f88"/></svg>
<section id="dialog" style="left:566px;top:247px;width:368px;height:350px"><svg class="ic" style="left:0;top:0" width="368" height="350" viewBox="0 0 368 350"><rect x=".2" y=".05" width="367.600" height="349.550" rx="2.300" fill="#a9a9a9"/><rect x=".2" y=".05" width="367.600" height="349.550" rx="2.300" fill="none" stroke="#8c8c8c" stroke-opacity=".55" stroke-width=".8"/><rect x="2.800" y="2.750" width="362.400" height="344.250" rx=".8" fill="#dadada"/><rect x="3.400" y="3.300" width="361.200" height="343.100" rx=".6" fill="#ececec"/></svg></section><span class="t" style="left:587.80px;top:273.00px;font-size:13px;line-height:15px;color:#000;letter-spacing:0.239px;">Übergeordneter Layer:</span><div class="combo" style="left:734px;top:270px;width:177px;height:20px;"></div><div class="pop" style="left:893px;top:272px;width:16px;height:16px;"><svg class="ic" style="left:0;top:0" width="16" height="16" viewBox="0 0 16 16"><path d="M5.200 6.900 8.200 3.800l3 3.100M5.200 9.500l3 3.100 3-3.100" fill="none" stroke="#fff" stroke-width="1.300" stroke-linecap="round" stroke-linejoin="round"/></svg></div><span class="t" style="left:587.73px;top:304.20px;font-size:13px;line-height:15px;color:#000;letter-spacing:0.144px;">Layername:</span><div class="inp" style="left:733px;top:302px;width:178px;height:19px;"></div><span class="t" style="left:734.49px;top:304.20px;font-size:13px;line-height:15px;color:#000;letter-spacing:0.323px;">Ziffern</span><div class="grp" style="left:588.3px;top:340.2px;width:323px;height:162.2px;"></div><span class="t" style="left:595.78px;top:327.70px;font-size:11.6px;line-height:12px;color:#111;letter-spacing:0.254px;">Attribute</span><span class="t" style="left:638.73px;top:359.70px;font-size:13px;line-height:15px;color:#000;letter-spacing:0.015px;">Farbe:</span><div class="combo" style="left:686px;top:357px;width:209px;height:20px;"></div><div class="pop" style="left:878px;top:359px;width:16px;height:16px;"><svg class="ic" style="left:0;top:0" width="16" height="16" viewBox="0 0 16 16"><path d="M5.200 6.900 8.200 3.800l3 3.100M5.200 9.500l3 3.100 3-3.100" fill="none" stroke="#fff" stroke-width="1.300" stroke-linecap="round" stroke-linejoin="round"/></svg></div><svg class="ic" style="left:686px;top:357px;" width="24" height="20" viewBox="0 0 24 20"><rect x="3.300" y="5.200" width="15" height="9" fill="#ffff00" stroke="#000" stroke-width="1.200"/></svg><span class="t" style="left:710.85px;top:359.70px;font-size:13px;line-height:15px;color:#000;letter-spacing:0.044px;">Gelb</span><span class="t" style="left:602.73px;top:392.00px;font-size:13px;line-height:15px;color:#000;letter-spacing:0.235px;">Linienbreite:</span><div class="combo" style="left:686px;top:389px;width:209px;height:20px;"></div><div class="pop" style="left:878px;top:391px;width:16px;height:16px;"><svg class="ic" style="left:0;top:0" width="16" height="16" viewBox="0 0 16 16"><path d="M5.200 6.900 8.200 3.800l3 3.100M5.200 9.500l3 3.100 3-3.100" fill="none" stroke="#fff" stroke-width="1.300" stroke-linecap="round" stroke-linejoin="round"/></svg></div><svg class="ic" style="left:686px;top:389px;" width="24" height="20" viewBox="0 0 24 20"><path d="M2.800 9.800h16" stroke="#222" stroke-width="1"/></svg><span class="t" style="left:710.99px;top:392.00px;font-size:13px;line-height:15px;color:#000;letter-spacing:0.090px;">0.25mm (ISO)</span><span class="t" style="left:617.83px;top:423.70px;font-size:13px;line-height:15px;color:#000;letter-spacing:0.322px;">Linientyp:</span><div class="combo" style="left:686px;top:421px;width:209px;height:20px;"></div><div class="pop" style="left:878px;top:423px;width:16px;height:16px;"><svg class="ic" style="left:0;top:0" width="16" height="16" viewBox="0 0 16 16"><path d="M5.200 6.900 8.200 3.800l3 3.100M5.200 9.500l3 3.100 3-3.100" fill="none" stroke="#fff" stroke-width="1.300" stroke-linecap="round" stroke-linejoin="round"/></svg></div><span class="t" style="left:688.73px;top:422.00px;font-size:13px;line-height:15px;color:#000;letter-spacing:0.254px;">Durchgehend</span><div style="left:603px;top:452px;width:14px;height:14px;background:linear-gradient(#2f8fff,#0a74f5);border-radius:3.200px"><svg class="ic" style="left:0;top:0" width="14" height="14" viewBox="0 0 14 14"><path d="M3.300 7.400l2.600 2.800 4.800-6.400" fill="none" stroke="#fff" stroke-width="1.800" stroke-linecap="round" stroke-linejoin="round"/></svg></div><span class="t" style="left:620.93px;top:452.00px;font-size:13px;line-height:15px;color:#000;letter-spacing:0.282px;">Plottbar</span><div style="left:603px;top:475px;width:14px;height:14px;background:linear-gradient(#2f8fff,#0a74f5);border-radius:3.200px"><svg class="ic" style="left:0;top:0" width="14" height="14" viewBox="0 0 14 14"><path d="M3.300 7.400l2.600 2.800 4.800-6.400" fill="none" stroke="#fff" stroke-width="1.800" stroke-linecap="round" stroke-linejoin="round"/></svg></div><span class="t" style="left:620.93px;top:475.00px;font-size:13px;line-height:15px;color:#000;letter-spacing:-0.056px;">Fangbar</span><div style="left:733.6px;top:556px;width:94.4px;height:20.4px;background:#fff;border-radius:5.500px;box-shadow:0 0 0 .5px rgba(0,0,0,.12),0 .5px 1.500px rgba(0,0,0,.28)"></div><span class="t" style="left:749.18px;top:558.00px;font-size:13px;line-height:15px;color:#000;letter-spacing:0.197px;">Abbrechen</span><div style="left:844px;top:556px;width:67.2px;height:20.4px;background:linear-gradient(#2d8dff,#0a72f4);border-radius:5.500px;box-shadow:0 .5px 1px rgba(0,40,120,.35)"></div><span class="t" style="left:868.59px;top:558.00px;font-size:13px;line-height:15px;color:#fff;letter-spacing:-0.450px;">OK</span><div style="left:751.4px;top:327.3px;width:79px;height:79px;border-radius:50%;background:radial-gradient(circle closest-side,rgba(255,255,255,0) 0,rgba(255,255,255,0) 66%,rgba(255,255,255,.5) 76%,rgba(240,245,250,.7) 82%,rgba(168,190,212,.62) 86%,rgba(150,175,202,.72) 91%,rgba(160,184,208,.62) 95%,rgba(175,195,215,.4) 98%,rgba(175,195,215,0) 100%)"></div><svg class="ic" style="left:789px;top:365px;" width="20" height="30" viewBox="0 0 20 30"><path d="M2 2.400v21.300l6.500-5.300 4.800 10.700 2.900-1.800-5.900-10.700h7.100z" fill="#fff" stroke="#000" stroke-width="1.300" stroke-linejoin="miter"/></svg>
</div>
</body></html>
